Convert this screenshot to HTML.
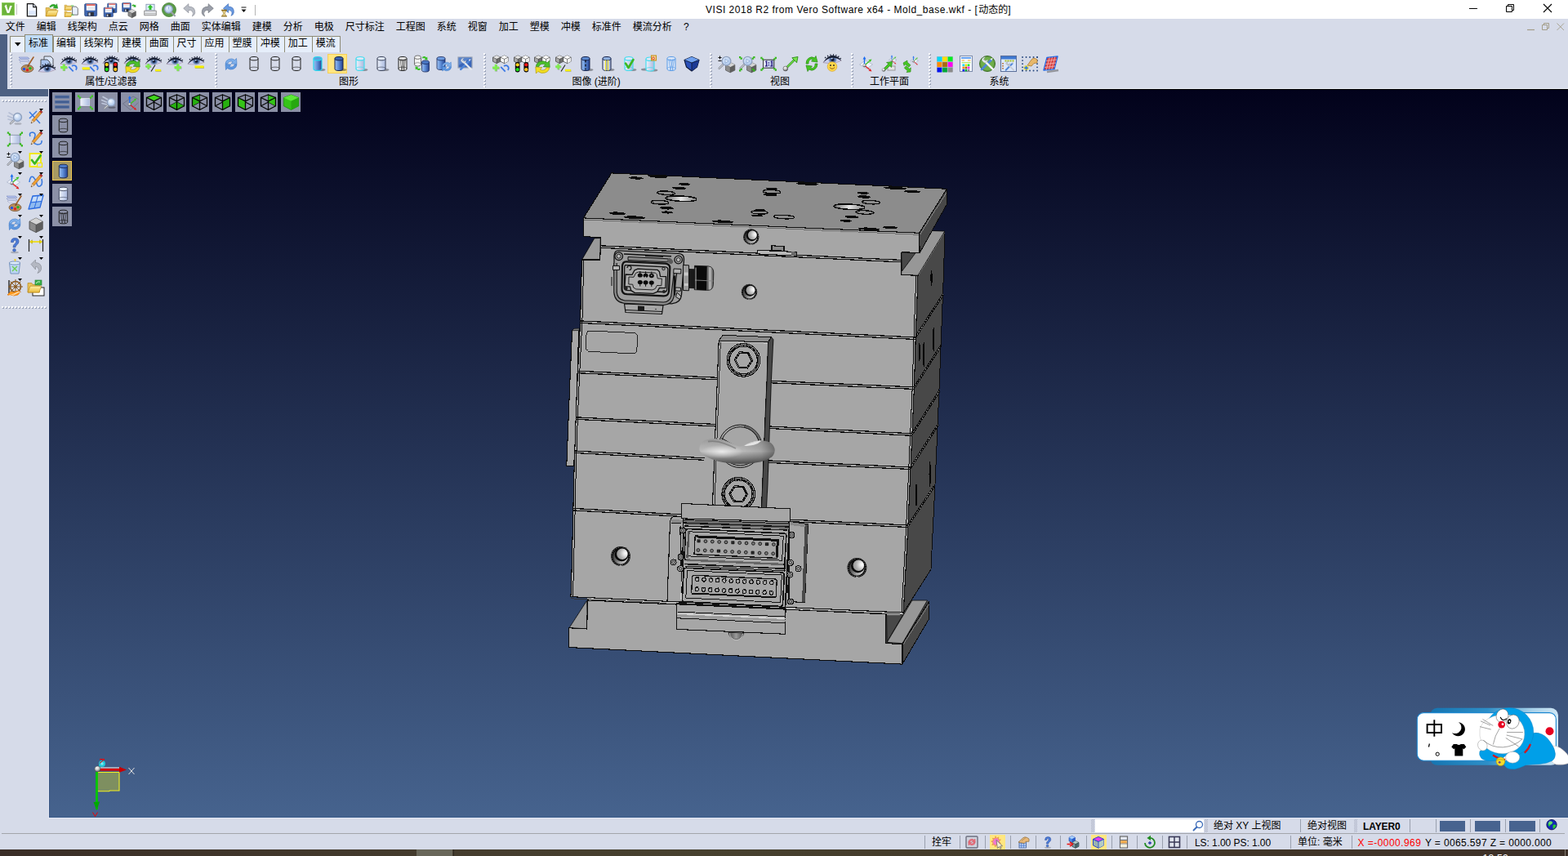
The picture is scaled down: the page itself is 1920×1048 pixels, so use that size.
<!DOCTYPE html>
<html lang="zh"><head><meta charset="utf-8"><title>VISI 2018 R2 - Mold_base.wkf</title>
<style>
html,body{margin:0;padding:0;overflow:hidden}
body{width:1920px;height:1048px;overflow:hidden;position:relative;background:#d6dbe9;font-family:"Liberation Sans",sans-serif;font-size:12px;color:#000}
body>div,body>svg,.abs{position:absolute}
svg.t{position:absolute;overflow:visible}
.lt{position:absolute;white-space:nowrap;line-height:16px}
.cj{font-family:"Liberation Sans","Noto Sans CJK SC",sans-serif;font-size:12px;color:#000}
.ic{position:absolute;overflow:visible}
</style></head>
<body>
<div style="left:0px;top:0px;width:1920px;height:23px;background:#fff;"></div>
<div style="left:0px;top:42px;width:9px;height:67px;background:#4d6082;"></div>
<div style="left:0px;top:108px;width:60px;height:10px;background:#4d6082;"></div>
<div id="vp" style="left:60px;top:109px;width:1860px;height:892px;background:linear-gradient(#02021b,#46638e)"></div>
<div style="left:60px;top:109px;width:1860px;height:1px;background:#000;"></div>
<div style="left:60px;top:110px;width:1px;height:891px;background:rgba(40,70,120,.35);"></div>
<div style="left:60px;top:1000px;width:1860px;height:1px;background:rgba(40,80,130,.45);"></div>
<div style="left:59px;top:109px;width:1px;height:893px;background:#e2e6f3;"></div>
<div style="left:59px;top:1001px;width:1861px;height:1px;background:#e2e6f3;"></div>
<svg width="0" height="0" style="position:absolute" aria-hidden="true"><defs><linearGradient id="gBlue" x1="0" x2="1"><stop offset="0" stop-color="#9ec1f0"/><stop offset=".45" stop-color="#5f8fd8"/><stop offset="1" stop-color="#23408f"/></linearGradient><linearGradient id="gPale" x1="0" x2="1"><stop offset="0" stop-color="#eef2fb"/><stop offset=".5" stop-color="#cbd6ee"/><stop offset="1" stop-color="#a9b8dc"/></linearGradient><linearGradient id="gGreen" x1="0" y1="0" x2="1" y2="1"><stop offset="0" stop-color="#8ae05a"/><stop offset="1" stop-color="#2f9a1e"/></linearGradient><linearGradient id="gGray" x1="0" y1="0" x2="1" y2="1"><stop offset="0" stop-color="#d8d8d8"/><stop offset="1" stop-color="#7a7a7a"/></linearGradient><linearGradient id="gYel" x1="0" y1="0" x2="0" y2="1"><stop offset="0" stop-color="#fff0a8"/><stop offset="1" stop-color="#e8b93a"/></linearGradient><radialGradient id="gLens" cx=".4" cy=".35" r=".7"><stop offset="0" stop-color="#f4f9ff"/><stop offset="1" stop-color="#9dbbe6"/></radialGradient><radialGradient id="gBall" cx=".4" cy=".3" r=".7"><stop offset="0" stop-color="#fff"/><stop offset=".5" stop-color="#c8c8c8"/><stop offset="1" stop-color="#555"/></radialGradient><radialGradient id="gIris" cx=".5" cy=".5" r=".5"><stop offset="0" stop-color="#1a2440"/><stop offset=".45" stop-color="#3c5a92"/><stop offset="1" stop-color="#9fb4d6"/></radialGradient><linearGradient id="gBlueV" x1="0" y1="0" x2="0" y2="1"><stop offset="0" stop-color="#a9c9f2"/><stop offset="1" stop-color="#3b6cc0"/></linearGradient></defs></svg>
<svg class="ic" style="left:2px;top:3px" width="16" height="16" viewBox="0 0 16 16"><rect width="16" height="16" fill="#6cb33a"/><rect x=".5" y=".5" width="15" height="15" fill="none" stroke="#8fd060" stroke-width="1"/><path d="M3.500 4h2.600l2 6.500L10.200 4h2.600L9.300 13H6.800z" fill="#fff"/><circle cx="5.400" cy="3.600" r=".9" fill="#fff"/></svg><div class="abs" style="left:20px;top:5px;width:1px;height:13px;background:#c8c8c8"></div><svg class="ic" style="left:30px;top:2.8px" width="18" height="18" viewBox="0 0 16 16"><path d="M3 1.500h6.500l3.500 3.500v10H3z" fill="#f4f7ff" stroke="#111" stroke-width="1.100"/><path d="M9.500 1.500v3.500h3.500" fill="#dfe8fb" stroke="#111" stroke-width=".9"/><path d="M4 9h8v5H4z" fill="#d6e2fa" opacity=".8"/></svg><svg class="ic" style="left:54.5px;top:2.8px" width="18" height="18" viewBox="0 0 16 16"><g transform="translate(1 3) scale(0.95)"><path d="M0 3h4l1 1.5h7v8H0z" fill="#e9c35a" stroke="#b88a1e" stroke-width=".6"/><path d="M0 12.5l2.5-6.5h11.5l-2.5 6.5z" fill="url(#gYel)" stroke="#b88a1e" stroke-width=".6"/></g><path d="M5 4.500q3-4 7-1.500l1-1.500 1 5-5-.5 1.300-1.300q-2.300-1.500-4.300.8z" fill="#2fae28" stroke="#1d7a18" stroke-width=".4"/></svg><svg class="ic" style="left:78.5px;top:2.8px" width="18" height="18" viewBox="0 0 16 16"><g transform="translate(0 1) scale(0.6)"><path d="M0 3h4l1 1.5h7v8H0z" fill="#e9c35a" stroke="#b88a1e" stroke-width=".6"/><path d="M0 12.5l2.5-6.5h11.5l-2.5 6.5z" fill="url(#gYel)" stroke="#b88a1e" stroke-width=".6"/></g><g transform="translate(0 8) scale(0.6)"><path d="M0 3h4l1 1.5h7v8H0z" fill="#e9c35a" stroke="#b88a1e" stroke-width=".6"/><path d="M0 12.5l2.5-6.5h11.5l-2.5 6.5z" fill="url(#gYel)" stroke="#b88a1e" stroke-width=".6"/></g><path d="M8.500 4.500h4l2 2v7h-6z" fill="#e8f0fd" stroke="#555" stroke-width=".7"/><path d="M7 3.500h3M7 13.500h3" stroke="#58c048" stroke-width=".9"/></svg><svg class="ic" style="left:102px;top:2.8px" width="18" height="18" viewBox="0 0 16 16"><g transform="translate(1.5 1.5) scale(0.95)"><rect x="0" y="0" width="14" height="14" rx="1" fill="#3f66b0" stroke="#26407a" stroke-width=".7"/><rect x="2" y="0.5" width="10" height="7" fill="#fff"/><rect x="2" y=".5" width="10" height="1.6" fill="#e05a50"/><path d="M3 4h8M3 5.8h8" stroke="#b9c2d2" stroke-width=".6"/><rect x="3.5" y="9.5" width="7" height="4.5" fill="#2b2f3c"/><rect x="4.5" y="10.3" width="2" height="3.2" fill="#c9d3e6"/></g></svg><svg class="ic" style="left:126px;top:2.8px" width="18" height="18" viewBox="0 0 16 16"><g transform="translate(5 1) scale(0.72)"><rect x="0" y="0" width="14" height="14" rx="1" fill="#3f66b0" stroke="#26407a" stroke-width=".7"/><rect x="2" y="0.5" width="10" height="7" fill="#fff"/><rect x="2" y=".5" width="10" height="1.6" fill="#e05a50"/><path d="M3 4h8M3 5.8h8" stroke="#b9c2d2" stroke-width=".6"/><rect x="3.5" y="9.5" width="7" height="4.5" fill="#2b2f3c"/><rect x="4.5" y="10.3" width="2" height="3.2" fill="#c9d3e6"/></g><g transform="translate(1 5.5) scale(0.72)"><rect x="0" y="0" width="14" height="14" rx="1" fill="#3f66b0" stroke="#26407a" stroke-width=".7"/><rect x="2" y="0.5" width="10" height="7" fill="#fff"/><rect x="2" y=".5" width="10" height="1.6" fill="#e05a50"/><path d="M3 4h8M3 5.8h8" stroke="#b9c2d2" stroke-width=".6"/><rect x="3.5" y="9.5" width="7" height="4.5" fill="#2b2f3c"/><rect x="4.5" y="10.3" width="2" height="3.2" fill="#c9d3e6"/></g></svg><svg class="ic" style="left:149px;top:2.8px" width="18" height="18" viewBox="0 0 16 16"><g transform="translate(0.5 0.5) scale(0.68)"><rect x="0" y="0" width="14" height="14" rx="1" fill="#3f66b0" stroke="#26407a" stroke-width=".7"/><rect x="2" y="0.5" width="10" height="7" fill="#fff"/><rect x="2" y=".5" width="10" height="1.6" fill="#e05a50"/><path d="M3 4h8M3 5.8h8" stroke="#b9c2d2" stroke-width=".6"/><rect x="3.5" y="9.5" width="7" height="4.5" fill="#2b2f3c"/><rect x="4.5" y="10.3" width="2" height="3.2" fill="#c9d3e6"/></g><path d="M11 3q2-1.500 3.500 0l.8-.8.2 3-3-.3.900-.8q-1-.8-2.200 0z" fill="#2fae28"/><g transform="translate(7 7.500) scale(.7)"><g transform="translate(0 0) scale(1)"><path d="M0 3l6-3 6 3v7l-6 3-6-3z" fill="#8c8c8c" stroke="#444" stroke-width=".6"/><path d="M0 3l6-3 6 3-6 3z" fill="#d4d4d4"/><path d="M6 6l6-3v7l-6 3z" fill="#5e5e5e"/><path d="M0 3l6 3v7" fill="none" stroke="#444" stroke-width=".5"/></g></g></svg><svg class="ic" style="left:174.5px;top:2.8px" width="18" height="18" viewBox="0 0 16 16"><rect x="3.500" y="2" width="9" height="7" fill="#dff0ff" stroke="#7a8aa8" stroke-width=".7"/><path d="M8 2.500l3 3H9.300v2.500H6.700V5.500H5z" fill="#2fc028"/><path d="M1.500 9h13v5h-13z" fill="#e4e6ea" stroke="#888" stroke-width=".8"/><path d="M1.500 12.200h13" stroke="#aaa" stroke-width=".8"/></svg><svg class="ic" style="left:198px;top:2.8px" width="18" height="18" viewBox="0 0 16 16"><circle cx="8" cy="8" r="7.600" fill="#5a9a48" stroke="#3f7a30" stroke-width=".6"/><circle cx="7.500" cy="7.300" r="4.300" fill="url(#gLens)" stroke="#8fa0bd" stroke-width="1.100"/><path d="M10.800 10.800l3.400 3.600" stroke="#9aa0aa" stroke-width="2" stroke-linecap="round"/><path d="M7.500 4.500v3" stroke="#8fb0e0" stroke-width=".8"/></svg><svg class="ic" style="left:223px;top:2.8px" width="18" height="18" viewBox="0 0 16 16"><path d="M1.500 6.500L7 1.500v3q7.500 0 7 7-.5 2.500-3 3.500 2-3.500 0-5.500-1.500-1.300-4-1.200v3z" fill="#b8bcc4" stroke="#8a8e98" stroke-width=".6"/></svg><svg class="ic" style="left:245px;top:2.8px" width="18" height="18" viewBox="0 0 16 16"><path d="M14.500 6.500L9 1.500v3q-7.500 0-7 7 .5 2.500 3 3.500-2-3.500 0-5.500 1.500-1.300 4-1.200v3z" fill="#9a9ea8" stroke="#70747e" stroke-width=".6"/></svg><svg class="ic" style="left:270px;top:2.8px" width="18" height="18" viewBox="0 0 16 16"><path d="M3 6.500L8.500 1.500v3q6.500 0 6 6.500-.5 2.500-3 3.500 2-3.500 0-5.200-1.300-1.300-3-1.200v3z" fill="#6a9ae0" stroke="#3a6ab8" stroke-width=".6"/><path d="M1 8.500h6M1 15h6" stroke="#8a6a1a" stroke-width="1.300"/><path d="M1.800 9l4.400 0-1.600 2.800 1.600 2.800H1.800l1.600-2.800z" fill="#e8d48a" stroke="#8a6a1a" stroke-width=".5"/></svg><svg class="ic" style="left:295px;top:8px" width="8" height="8"><path d="M.5 1h6" stroke="#111" stroke-width="1"/><path d="M.5 3.500h6L3.500 7z" fill="#111"/></svg><div class="abs" style="left:312px;top:6px;width:1px;height:13px;background:#b4b4b4"></div>
<div class="lt" style="left:864px;top:3.500px;font-size:12px;letter-spacing:0.520px">VISI 2018 R2 from Vero Software x64 - Mold_base.wkf - [</div>
<div class="lt cj" style="left:1198.2px;top:3.5px">动态的</div>
<div class="lt" style="left:1234.300px;top:3.500px;font-size:12px">]</div>
<svg class="ic" style="left:1798px;top:4px" width="108" height="14"><path d="M1 6.500h10" stroke="#000" stroke-width="1"/><path d="M46.500 3.500h7v7h-7zM48.500 3.500v-2h7v7h-2" fill="none" stroke="#000" stroke-width="1"/><path d="M92 1l10 10M102 1l-10 10" stroke="#000" stroke-width="1.100"/></svg><svg class="ic" style="left:1869px;top:27px" width="48" height="12"><path d="M1 9.500h9" stroke="#a39d88" stroke-width="1.200"/><path d="M19.500 3.500h6v6h-6zM21.500 3.500v-2h6v6h-2" fill="none" stroke="#a39d88" stroke-width="1"/><path d="M37.500 1.500l8.500 8.500M46 1.500l-8.500 8.500" stroke="#a39d88" stroke-width=".9"/></svg>
<div class="lt cj" style="left:6.7px;top:24.7px">文件</div>
<div class="lt cj" style="left:44.7px;top:24.7px">编辑</div>
<div class="lt cj" style="left:82.7px;top:24.7px">线架构</div>
<div class="lt cj" style="left:132.7px;top:24.7px">点云</div>
<div class="lt cj" style="left:170.7px;top:24.7px">网格</div>
<div class="lt cj" style="left:208.7px;top:24.7px">曲面</div>
<div class="lt cj" style="left:246.7px;top:24.7px">实体编辑</div>
<div class="lt cj" style="left:308.7px;top:24.7px">建模</div>
<div class="lt cj" style="left:346.7px;top:24.7px">分析</div>
<div class="lt cj" style="left:384.7px;top:24.7px">电极</div>
<div class="lt cj" style="left:422.7px;top:24.7px">尺寸标注</div>
<div class="lt cj" style="left:484.7px;top:24.7px">工程图</div>
<div class="lt cj" style="left:534.7px;top:24.7px">系统</div>
<div class="lt cj" style="left:572.7px;top:24.7px">视窗</div>
<div class="lt cj" style="left:610.7px;top:24.7px">加工</div>
<div class="lt cj" style="left:648.7px;top:24.7px">塑模</div>
<div class="lt cj" style="left:686.7px;top:24.7px">冲模</div>
<div class="lt cj" style="left:724.7px;top:24.7px">标准件</div>
<div class="lt cj" style="left:774.7px;top:24.7px">模流分析</div>
<div class="lt" style="left:837px;top:25px;font-size:12px">?</div>
<div class="abs" style="left:12px;top:44.2px;width:18.8px;height:19.8px;background:#eaf0fb;border:1px solid #8e8b76;border-bottom:none;box-sizing:border-box"></div><svg class="ic" style="left:17.600px;top:52.200px" width="8" height="5"><path d="M0 0h7.500L3.750 4.500z" fill="#000"/></svg><div class="abs" style="left:30.3px;top:42.2px;width:34.8px;height:21.8px;background:#c0dbf7;border:1px solid #8e8b76;border-bottom:none;box-sizing:border-box"></div><div class="lt cj" style="left:35.1px;top:44.7px">标准</div><div class="abs" style="left:64.7px;top:44.2px;width:34.4px;height:19.8px;background:#e6eefa;border:1px solid #8e8b76;border-bottom:none;box-sizing:border-box"></div><div class="lt cj" style="left:69px;top:45.1px">编辑</div><div class="abs" style="left:98.1px;top:44.2px;width:47.2px;height:19.8px;background:#e6eefa;border:1px solid #8e8b76;border-bottom:none;box-sizing:border-box"></div><div class="lt cj" style="left:102.85px;top:45.1px">线架构</div><div class="abs" style="left:144.3px;top:44.2px;width:35px;height:19.8px;background:#e6eefa;border:1px solid #8e8b76;border-bottom:none;box-sizing:border-box"></div><div class="lt cj" style="left:148.9px;top:45.1px">建模</div><div class="abs" style="left:178.3px;top:44.2px;width:34.6px;height:19.8px;background:#e6eefa;border:1px solid #8e8b76;border-bottom:none;box-sizing:border-box"></div><div class="lt cj" style="left:182.7px;top:45.1px">曲面</div><div class="abs" style="left:211.9px;top:44.2px;width:35px;height:19.8px;background:#e6eefa;border:1px solid #8e8b76;border-bottom:none;box-sizing:border-box"></div><div class="lt cj" style="left:216.5px;top:45.1px">尺寸</div><div class="abs" style="left:245.9px;top:44.2px;width:35px;height:19.8px;background:#e6eefa;border:1px solid #8e8b76;border-bottom:none;box-sizing:border-box"></div><div class="lt cj" style="left:250.5px;top:45.1px">应用</div><div class="abs" style="left:279.9px;top:44.2px;width:35px;height:19.8px;background:#e6eefa;border:1px solid #8e8b76;border-bottom:none;box-sizing:border-box"></div><div class="lt cj" style="left:284.5px;top:45.1px">塑膜</div><div class="abs" style="left:313.9px;top:44.2px;width:35.3px;height:19.8px;background:#e6eefa;border:1px solid #8e8b76;border-bottom:none;box-sizing:border-box"></div><div class="lt cj" style="left:318.65px;top:45.1px">冲模</div><div class="abs" style="left:348.2px;top:44.2px;width:34.7px;height:19.8px;background:#e6eefa;border:1px solid #8e8b76;border-bottom:none;box-sizing:border-box"></div><div class="lt cj" style="left:352.65px;top:45.1px">加工</div><div class="abs" style="left:381.9px;top:44.2px;width:35.5px;height:19.8px;background:#e6eefa;border:1px solid #8e8b76;border-bottom:none;box-sizing:border-box"></div><div class="lt cj" style="left:386.75px;top:45.1px">模流</div>
<div class="abs" style="left:9px;top:107.5px;width:1911px;height:1.5px;background:#e9edf5"></div><div class="abs" style="left:12.2px;top:65px;width:3px;height:42px;background:radial-gradient(circle at 1px 1px,#fff 0.9px,rgba(255,255,255,0) 1.3px),radial-gradient(circle at 2px 2px,#9aa3b8 0.9px,rgba(0,0,0,0) 1.3px);background-size:3px 4px"></div><svg class="ic" style="left:21px;top:66px" width="24" height="24" viewBox="0 0 24 24"><path d="M2 4h11l2 2H4z" fill="#b9c6ee" stroke="#6878b8" stroke-width=".5"/><path d="M2 7h11l2 2H4z" fill="#dfe4f4" stroke="#6878b8" stroke-width=".5"/><path d="M3 10h10l2 2H5z" fill="#f2f4fa" stroke="#8a93b8" stroke-width=".5"/><ellipse cx="12.5" cy="18" rx="7.5" ry="4.6" fill="#b98c5a" stroke="#6b4a28" stroke-width=".7"/><circle cx="8.5" cy="18.5" r="1.7" fill="#2050e0"/><circle cx="12.5" cy="19.8" r="1.7" fill="#e02020"/><circle cx="16" cy="17.6" r="1.7" fill="#20b820"/><path d="M13 15L20 4" stroke="#a0602a" stroke-width="1.6" stroke-linecap="round"/><path d="M12.2 16.5l1.6-2.6 1 .7z" fill="#333"/></svg><svg class="ic" style="left:46.5px;top:66px" width="24" height="24" viewBox="0 0 24 24"><path d="M7 3h8l3 3v10H7z" fill="#d9e5f8" stroke="#333" stroke-width=".8"/><path d="M3 7h8l3 3v9H3z" fill="#a9c3ec" stroke="#333" stroke-width=".8"/><g transform="translate(10.5 18) scale(1.05)"><path d="M-10 3.300Q-5 -3.800 0 -4Q6 -3.800 10 1.200Q4 4.200 -1 4Q-6 4.200 -10 3.300Z" fill="#c9cdee" stroke="#8a6a7a" stroke-width=".4"/><ellipse cx=".5" cy=".2" rx="4.600" ry="4" fill="url(#gIris)"/><circle cx=".4" cy="0" r="1.600" fill="#0e1428"/><circle cx="-.3" cy="-1.300" r=".9" fill="#cfe0ff"/><path d="M-10.200 3.500Q-5.500 -4.200 0 -4.800Q6.500 -4.600 10.400 1.400Q6 -1.900 0 -2.100Q-5 -1.800 -10.200 3.500Z" fill="#182034"/><path d="M-7 -1.600l-1.100-1.200M-4.500 -3.300l-.7-1.400M-1.700 -4.400l-.2-1.500M1.300 -4.600l.2-1.500M4 -4l.7-1.400M6.500 -2.700l1.100-1.200M8.600 -.8l1.300-.9" stroke="#182034" stroke-width="1.100" fill="none"/></g></svg><svg class="ic" style="left:72px;top:66px" width="24" height="24" viewBox="0 0 24 24"><g transform="translate(12 9) scale(1)"><path d="M-10 3.300Q-5 -3.800 0 -4Q6 -3.800 10 1.200Q4 4.200 -1 4Q-6 4.200 -10 3.300Z" fill="#c9cdee" stroke="#8a6a7a" stroke-width=".4"/><ellipse cx=".5" cy=".2" rx="4.600" ry="4" fill="url(#gIris)"/><circle cx=".4" cy="0" r="1.600" fill="#0e1428"/><circle cx="-.3" cy="-1.300" r=".9" fill="#cfe0ff"/><path d="M-10.200 3.500Q-5.500 -4.200 0 -4.800Q6.500 -4.600 10.400 1.400Q6 -1.900 0 -2.100Q-5 -1.800 -10.200 3.500Z" fill="#182034"/><path d="M-7 -1.600l-1.100-1.200M-4.500 -3.300l-.7-1.400M-1.700 -4.400l-.2-1.500M1.300 -4.600l.2-1.500M4 -4l.7-1.400M6.500 -2.700l1.100-1.200M8.600 -.8l1.300-.9" stroke="#182034" stroke-width="1.100" fill="none"/></g><path d="M2.6 17h8M6.6 13v8" stroke="#4a5a3a" stroke-width="2.7" fill="none" opacity=".45"/><path d="M2.1 16.4h8M6.1 12.4v8" stroke="#7fee4e" stroke-width="2.7" fill="none"/><path d="M12.2 15.6L17.7 21.4" stroke="#3a78e6" stroke-width="1.700" fill="none"/><path d="M16.1 15A3.200 3.200 0 0 1 20.8 19.7" stroke="#3a78e6" stroke-width="1.800" fill="none"/></svg><svg class="ic" style="left:98px;top:66px" width="24" height="24" viewBox="0 0 24 24"><g transform="translate(12 9) scale(1)"><path d="M-10 3.300Q-5 -3.800 0 -4Q6 -3.800 10 1.200Q4 4.200 -1 4Q-6 4.200 -10 3.300Z" fill="#c9cdee" stroke="#8a6a7a" stroke-width=".4"/><ellipse cx=".5" cy=".2" rx="4.600" ry="4" fill="url(#gIris)"/><circle cx=".4" cy="0" r="1.600" fill="#0e1428"/><circle cx="-.3" cy="-1.300" r=".9" fill="#cfe0ff"/><path d="M-10.200 3.500Q-5.500 -4.200 0 -4.800Q6.500 -4.600 10.400 1.400Q6 -1.900 0 -2.100Q-5 -1.800 -10.200 3.500Z" fill="#182034"/><path d="M-7 -1.600l-1.100-1.200M-4.500 -3.300l-.7-1.400M-1.700 -4.400l-.2-1.500M1.300 -4.600l.2-1.500M4 -4l.7-1.400M6.500 -2.700l1.100-1.200M8.600 -.8l1.300-.9" stroke="#182034" stroke-width="1.100" fill="none"/></g><path d="M3.1 18.4h9" stroke="#8a8a10" stroke-width="2.7" fill="none" opacity=".5"/><path d="M2.7 17.7h9" stroke="#f6f000" stroke-width="2.7" fill="none"/><path d="M12.2 15.6L17.7 21.4" stroke="#3a78e6" stroke-width="1.700" fill="none"/><path d="M16.1 15A3.200 3.200 0 0 1 20.8 19.7" stroke="#3a78e6" stroke-width="1.800" fill="none"/></svg><svg class="ic" style="left:124px;top:66px" width="24" height="24" viewBox="0 0 24 24"><g transform="translate(12 8.3) scale(1)"><path d="M-10 3.300Q-5 -3.800 0 -4Q6 -3.800 10 1.200Q4 4.200 -1 4Q-6 4.200 -10 3.300Z" fill="#c9cdee" stroke="#8a6a7a" stroke-width=".4"/><ellipse cx=".5" cy=".2" rx="4.600" ry="4" fill="url(#gIris)"/><circle cx=".4" cy="0" r="1.600" fill="#0e1428"/><circle cx="-.3" cy="-1.300" r=".9" fill="#cfe0ff"/><path d="M-10.200 3.500Q-5.500 -4.200 0 -4.800Q6.500 -4.600 10.400 1.400Q6 -1.900 0 -2.100Q-5 -1.800 -10.200 3.500Z" fill="#182034"/><path d="M-7 -1.600l-1.100-1.200M-4.500 -3.300l-.7-1.400M-1.700 -4.400l-.2-1.500M1.300 -4.600l.2-1.500M4 -4l.7-1.400M6.500 -2.700l1.100-1.200M8.600 -.8l1.300-.9" stroke="#182034" stroke-width="1.100" fill="none"/></g><rect x="3.8" y="9.8" width="5.800" height="12.400" rx="2.400" fill="#0c0c0c"/><rect x="14.4" y="9.8" width="5.800" height="12.400" rx="2.400" fill="#0c0c0c"/><circle cx="6.7" cy="13.1" r="2.150" fill="#ffd21e"/><circle cx="6.7" cy="19" r="2.150" fill="#1ee01a"/><circle cx="17.3" cy="13.1" r="2.150" fill="#f01414"/><circle cx="17.3" cy="19" r="2.150" fill="#ffc21e"/></svg><svg class="ic" style="left:150px;top:66px" width="24" height="24" viewBox="0 0 24 24"><g transform="translate(12 8.3) scale(1)"><path d="M-10 3.300Q-5 -3.800 0 -4Q6 -3.800 10 1.200Q4 4.200 -1 4Q-6 4.200 -10 3.300Z" fill="#c9cdee" stroke="#8a6a7a" stroke-width=".4"/><ellipse cx=".5" cy=".2" rx="4.600" ry="4" fill="url(#gIris)"/><circle cx=".4" cy="0" r="1.600" fill="#0e1428"/><circle cx="-.3" cy="-1.300" r=".9" fill="#cfe0ff"/><path d="M-10.200 3.500Q-5.500 -4.200 0 -4.800Q6.500 -4.600 10.400 1.400Q6 -1.900 0 -2.100Q-5 -1.800 -10.200 3.500Z" fill="#182034"/><path d="M-7 -1.600l-1.100-1.200M-4.500 -3.300l-.7-1.400M-1.700 -4.400l-.2-1.500M1.300 -4.600l.2-1.500M4 -4l.7-1.400M6.500 -2.700l1.100-1.200M8.600 -.8l1.300-.9" stroke="#182034" stroke-width="1.100" fill="none"/></g><g transform="translate(12.5 15) scale(1.25)"><path d="M-6.5 0a6.5 5.5 0 0 1 11-3.8l2-2 .5 6.5-6.5-.6 2-1.9a3.8 3.2 0 0 0-6.2 1.8z" fill="#4cc02a" stroke="#2a7f14" stroke-width=".5"/><path d="M6.5 1a6.5 5.5 0 0 1-11 3.8l-2 2-.5-6.5 6.5.6-2 1.9a3.8 3.2 0 0 0 6.2-1.8z" fill="#f2de22" stroke="#a8920a" stroke-width=".5"/></g></svg><svg class="ic" style="left:176px;top:66px" width="24" height="24" viewBox="0 0 24 24"><g transform="translate(12 9) scale(1)"><path d="M-10 3.300Q-5 -3.800 0 -4Q6 -3.800 10 1.200Q4 4.200 -1 4Q-6 4.200 -10 3.300Z" fill="#c9cdee" stroke="#8a6a7a" stroke-width=".4"/><ellipse cx=".5" cy=".2" rx="4.600" ry="4" fill="url(#gIris)"/><circle cx=".4" cy="0" r="1.600" fill="#0e1428"/><circle cx="-.3" cy="-1.300" r=".9" fill="#cfe0ff"/><path d="M-10.200 3.500Q-5.500 -4.200 0 -4.800Q6.500 -4.600 10.400 1.400Q6 -1.900 0 -2.100Q-5 -1.800 -10.200 3.500Z" fill="#182034"/><path d="M-7 -1.600l-1.100-1.200M-4.500 -3.300l-.7-1.400M-1.700 -4.400l-.2-1.500M1.300 -4.600l.2-1.500M4 -4l.7-1.400M6.500 -2.700l1.100-1.200M8.600 -.8l1.300-.9" stroke="#182034" stroke-width="1.100" fill="none"/></g><path d="M2.7 15.8h6.6M6 12.5v6.6" stroke="#4a5a3a" stroke-width="2.3" fill="none" opacity=".45"/><path d="M2.2 15.2h6.6M5.5 11.9v6.6" stroke="#7fee4e" stroke-width="2.3" fill="none"/><path d="M9 21.500l5-8" stroke="#222" stroke-width="1.100"/><path d="M14.4 20.7h7" stroke="#8a8a10" stroke-width="2.3" fill="none" opacity=".5"/><path d="M14 20h7" stroke="#f6f000" stroke-width="2.3" fill="none"/></svg><svg class="ic" style="left:202px;top:66px" width="24" height="24" viewBox="0 0 24 24"><g transform="translate(12 9) scale(1)"><path d="M-10 3.300Q-5 -3.800 0 -4Q6 -3.800 10 1.200Q4 4.200 -1 4Q-6 4.200 -10 3.300Z" fill="#c9cdee" stroke="#8a6a7a" stroke-width=".4"/><ellipse cx=".5" cy=".2" rx="4.600" ry="4" fill="url(#gIris)"/><circle cx=".4" cy="0" r="1.600" fill="#0e1428"/><circle cx="-.3" cy="-1.300" r=".9" fill="#cfe0ff"/><path d="M-10.200 3.500Q-5.500 -4.200 0 -4.800Q6.500 -4.600 10.400 1.400Q6 -1.900 0 -2.100Q-5 -1.800 -10.200 3.500Z" fill="#182034"/><path d="M-7 -1.600l-1.100-1.200M-4.500 -3.300l-.7-1.400M-1.700 -4.400l-.2-1.500M1.300 -4.600l.2-1.500M4 -4l.7-1.400M6.500 -2.700l1.100-1.200M8.600 -.8l1.300-.9" stroke="#182034" stroke-width="1.100" fill="none"/></g><path d="M12 17.1h8.4M16.2 12.9v8.4" stroke="#4a5a3a" stroke-width="2.8" fill="none" opacity=".45"/><path d="M11.5 16.5h8.4M15.7 12.3v8.4" stroke="#7fee4e" stroke-width="2.8" fill="none"/></svg><svg class="ic" style="left:228px;top:66px" width="24" height="24" viewBox="0 0 24 24"><g transform="translate(12 9) scale(1)"><path d="M-10 3.300Q-5 -3.800 0 -4Q6 -3.800 10 1.200Q4 4.200 -1 4Q-6 4.200 -10 3.300Z" fill="#c9cdee" stroke="#8a6a7a" stroke-width=".4"/><ellipse cx=".5" cy=".2" rx="4.600" ry="4" fill="url(#gIris)"/><circle cx=".4" cy="0" r="1.600" fill="#0e1428"/><circle cx="-.3" cy="-1.300" r=".9" fill="#cfe0ff"/><path d="M-10.200 3.500Q-5.500 -4.200 0 -4.800Q6.500 -4.600 10.400 1.400Q6 -1.900 0 -2.100Q-5 -1.800 -10.200 3.500Z" fill="#182034"/><path d="M-7 -1.600l-1.100-1.200M-4.500 -3.300l-.7-1.400M-1.700 -4.400l-.2-1.500M1.300 -4.600l.2-1.500M4 -4l.7-1.400M6.500 -2.700l1.100-1.200M8.600 -.8l1.300-.9" stroke="#182034" stroke-width="1.100" fill="none"/></g><path d="M10.9 16.5h11" stroke="#8a8a10" stroke-width="2.8" fill="none" opacity=".5"/><path d="M10.500 15.8h11" stroke="#f6f000" stroke-width="2.8" fill="none"/></svg><div class="lt cj" style="left:104.16px;top:92px">属性/过滤器</div><div class="abs" style="left:263px;top:65px;width:3px;height:42px;background:radial-gradient(circle at 1px 1px,#fff 0.9px,rgba(255,255,255,0) 1.3px),radial-gradient(circle at 2px 2px,#9aa3b8 0.9px,rgba(0,0,0,0) 1.3px);background-size:3px 4px"></div><svg class="ic" style="left:271px;top:66px" width="24" height="24" viewBox="0 0 24 24"><g transform="translate(12 12.5) scale(1)"><path d="M-7 -.5a7 6.5 0 0 1 11.5-4.5l2-2 .5 7-7-.6 2.2-2.2a4 3.6 0 0 0-6.4 2.3z" fill="#7fb0ea" stroke="#3d78c8" stroke-width=".6"/><path d="M7 .5a7 6.5 0 0 1-11.5 4.5l-2 2-.5-7 7 .6-2.2 2.2a4 3.6 0 0 0 6.4-2.3z" fill="#5e98e0" stroke="#3d78c8" stroke-width=".6"/></g></svg><svg class="ic" style="left:298.5px;top:66px" width="24" height="24" viewBox="0 0 24 24"><path d="M7 5.7v12.6a5 2.2 0 0 0 10 0v-12.6" fill="none" stroke="#222" stroke-width="1"/><ellipse cx="12" cy="5.7" rx="5" ry="2.2" fill="none" stroke="#222" stroke-width="1"/><path d="M7 18.3a5 2.2 0 0 1 10 0" fill="none" stroke="#222" stroke-width="0.8" opacity=".8"/></svg><svg class="ic" style="left:324.5px;top:66px" width="24" height="24" viewBox="0 0 24 24"><path d="M7 5.7v12.6a5 2.2 0 0 0 10 0v-12.6" fill="none" stroke="#222" stroke-width="1"/><ellipse cx="12" cy="5.7" rx="5" ry="2.2" fill="none" stroke="#222" stroke-width="1"/><path d="M7 18.3a5 2.2 0 0 1 10 0" fill="none" stroke="#222" stroke-width="0.8" opacity=".8"/></svg><svg class="ic" style="left:350.5px;top:66px" width="24" height="24" viewBox="0 0 24 24"><path d="M7 5.7v12.6a5 2.2 0 0 0 10 0v-12.6" fill="none" stroke="#222" stroke-width="1"/><ellipse cx="12" cy="5.7" rx="5" ry="2.2" fill="none" stroke="#222" stroke-width="1"/><path d="M7 18.3a5 2.2 0 0 1 10 0" fill="none" stroke="#222" stroke-width="0.8" opacity=".8"/></svg><svg class="ic" style="left:376.5px;top:66px" width="24" height="24" viewBox="0 0 24 24"><ellipse cx="15.5" cy="19.5" rx="6" ry="1.6" fill="#000" opacity=".35"/><path d="M7 5.7v12.6a5 2.2 0 0 0 10 0v-12.6" fill="url(#gBlue)" stroke="#27d8ee" stroke-width="1.2"/><ellipse cx="12" cy="5.7" rx="5" ry="2.2" fill="#5aa0e0" stroke="#27d8ee" stroke-width="1.2"/></svg><div class="abs" style="left:401px;top:66px;width:24px;height:24px;background:#ffe680;border:1px solid #f7cf5a;box-sizing:border-box"></div><svg class="ic" style="left:402.5px;top:66px" width="24" height="24" viewBox="0 0 24 24"><ellipse cx="15.5" cy="19.5" rx="6" ry="1.6" fill="#000" opacity=".35"/><path d="M7 5.7v12.6a5 2.2 0 0 0 10 0v-12.6" fill="url(#gBlue)" stroke="#16224a" stroke-width="1"/><ellipse cx="12" cy="5.7" rx="5" ry="2.2" fill="#3a63b0" stroke="#16224a" stroke-width="1"/></svg><svg class="ic" style="left:428.5px;top:66px" width="24" height="24" viewBox="0 0 24 24"><ellipse cx="15.5" cy="19.5" rx="6" ry="1.6" fill="#000" opacity=".35"/><path d="M7 5.7v12.6a5 2.2 0 0 0 10 0v-12.6" fill="url(#gPale)" stroke="#46dcee" stroke-width="1.2"/><ellipse cx="12" cy="5.7" rx="5" ry="2.2" fill="#dfe7f6" stroke="#46dcee" stroke-width="1.2"/><path d="M7 18.3a5 2.2 0 0 1 10 0" fill="none" stroke="#46dcee" stroke-width="0.96" opacity=".8"/></svg><svg class="ic" style="left:454.5px;top:66px" width="24" height="24" viewBox="0 0 24 24"><ellipse cx="15.5" cy="19.5" rx="6" ry="1.6" fill="#000" opacity=".35"/><path d="M7 5.7v12.6a5 2.2 0 0 0 10 0v-12.6" fill="url(#gPale)" stroke="#3a4258" stroke-width="1"/><ellipse cx="12" cy="5.7" rx="5" ry="2.2" fill="#dfe7f6" stroke="#3a4258" stroke-width="1"/><path d="M7 18.3a5 2.2 0 0 1 10 0" fill="none" stroke="#3a4258" stroke-width="0.8" opacity=".8"/></svg><svg class="ic" style="left:480.5px;top:66px" width="24" height="24" viewBox="0 0 24 24"><path d="M7 5.7v12.6a5 2.2 0 0 0 10 0v-12.6" fill="#e9e9e9" stroke="#222" stroke-width="1"/><ellipse cx="12" cy="5.7" rx="5" ry="2.2" fill="#e9e9e9" stroke="#222" stroke-width="1"/><path d="M7 18.3a5 2.2 0 0 1 10 0" fill="none" stroke="#222" stroke-width="0.8" opacity=".8"/><path d="M9 6l2 14M11 6l3 14M14 6l-3 14M15.5 6l-2 14" stroke="#222" stroke-width=".6" fill="none"/></svg><svg class="ic" style="left:505px;top:66px" width="24" height="24" viewBox="0 0 24 24"><path d="M2.5 4.2v8.6a4 2.2 0 0 0 8 0v-8.6" fill="#f2f2f2" stroke="#555" stroke-width="0.8"/><ellipse cx="6.5" cy="4.2" rx="4" ry="2.2" fill="#f2f2f2" stroke="#555" stroke-width="0.8"/><path d="M2.5 12.8a4 2.2 0 0 1 8 0" fill="none" stroke="#555" stroke-width="0.64" opacity=".8"/><path d="M11.5 10.2v9.6a4.5 2.2 0 0 0 9 0v-9.6" fill="url(#gBlue)" stroke="#1b2a5a" stroke-width="0.8"/><ellipse cx="16" cy="10.2" rx="4.5" ry="2.2" fill="#4a78c6" stroke="#1b2a5a" stroke-width="0.8"/><path d="M12 4q3-2 5 .5l1.200-1 .3 4-3.800-.6 1.200-1q-1.500-1.500-3.400-.4z" fill="#36c020"/><path d="M10 19q-3 2-5-.5l-1.200 1-.3-4 3.800.6-1.200 1q1.500 1.500 3.400.4z" fill="#36c020"/></svg><svg class="ic" style="left:532px;top:66px" width="24" height="24" viewBox="0 0 24 24"><path d="M3 5.7v11.6a5 2.2 0 0 0 10 0v-11.6" fill="url(#gBlue)" stroke="#1b2a5a" stroke-width="0.8"/><ellipse cx="8" cy="5.7" rx="5" ry="2.2" fill="#6d9be0" stroke="#1b2a5a" stroke-width="0.8"/><g transform="translate(15 15.5) scale(0.8)"><path d="M-7 -.5a7 6.5 0 0 1 11.5-4.5l2-2 .5 7-7-.6 2.2-2.2a4 3.6 0 0 0-6.4 2.3z" fill="#7fb0ea" stroke="#3d78c8" stroke-width=".6"/><path d="M7 .5a7 6.5 0 0 1-11.5 4.5l-2 2-.5-7 7 .6-2.2 2.2a4 3.6 0 0 0 6.4-2.3z" fill="#5e98e0" stroke="#3d78c8" stroke-width=".6"/></g></svg><svg class="ic" style="left:557.5px;top:66px" width="24" height="24" viewBox="0 0 24 24"><rect x="3" y="4" width="17" height="13" fill="#3b66b8" stroke="#9aa3b4" stroke-width="1.2"/><path d="M3.6 4.600h15.800L3.600 14z" fill="#6e97d8" opacity=".6"/><g transform="translate(12.5 12.5) scale(1.05)"><path d="M-6 6L4-4" stroke="#4f86d8" stroke-width="2.4" stroke-linecap="round"/><path d="M6 6L-3-3" stroke="#e6e9ee" stroke-width="2.2" stroke-linecap="round"/><path d="M-5.8-3.500a3 3 0 0 1 3.600-3.400l-1.800 1.900.6 1.700 1.800.5 1.800-1.800a3 3 0 0 1-3.600 3.500z" fill="#e6e9ee" stroke="#8a93a3" stroke-width=".4"/><path d="M3-5l3-1.500-1.400 3z" fill="#e6e9ee"/></g></svg><div class="lt cj" style="left:415px;top:92px">图形</div><div class="abs" style="left:592px;top:65px;width:3px;height:42px;background:radial-gradient(circle at 1px 1px,#fff 0.9px,rgba(255,255,255,0) 1.3px),radial-gradient(circle at 2px 2px,#9aa3b8 0.9px,rgba(0,0,0,0) 1.3px);background-size:3px 4px"></div><svg class="ic" style="left:600.5px;top:66px" width="24" height="24" viewBox="0 0 24 24"><path d="M2.5 4.2l4.700-2.200 4.700 2.200v5l-4.700 2.400-4.700-2.400z" fill="#a9a9a9" stroke="#333" stroke-width=".7"/><path d="M2.5 4.2l4.700-2.200 4.700 2.200-4.700 2.200z" fill="#e6e6e6"/><path d="M7.2 6.4l4.700-2.200v5l-4.700 2.400z" fill="#666" opacity=".9"/><path d="M2.5 4.2l4.700 2.200 4.700-2.200M7.2 6.4v5.200" fill="none" stroke="#333" stroke-width=".6"/><path d="M11.8 4.2l4.700-2.200 4.700 2.200v5l-4.700 2.400-4.700-2.400z" fill="#fff" stroke="#333" stroke-width=".7"/><path d="M11.8 4.2l4.700-2.200 4.700 2.200-4.700 2.200z" fill="#fff"/><path d="M16.5 6.4l4.700-2.200v5l-4.700 2.400z" fill="#ececec" opacity=".9"/><path d="M11.8 4.2l4.700 2.200 4.700-2.200M16.5 6.4v5.200" fill="none" stroke="#333" stroke-width=".6"/><path d="M2.6 17.4h8M6.6 13.4v8" stroke="#4a5a3a" stroke-width="2.7" fill="none" opacity=".45"/><path d="M2.1 16.8h8M6.1 12.8v8" stroke="#7fee4e" stroke-width="2.7" fill="none"/><path d="M12.2 15.8L17.7 21.6" stroke="#3a78e6" stroke-width="1.700" fill="none"/><path d="M16.1 15.2A3.200 3.200 0 0 1 20.8 19.9" stroke="#3a78e6" stroke-width="1.800" fill="none"/></svg><svg class="ic" style="left:626.5px;top:66px" width="24" height="24" viewBox="0 0 24 24"><path d="M2.5 4.2l4.700-2.200 4.700 2.200v5l-4.700 2.400-4.700-2.400z" fill="#a9a9a9" stroke="#333" stroke-width=".7"/><path d="M2.5 4.2l4.700-2.200 4.700 2.200-4.700 2.200z" fill="#e6e6e6"/><path d="M7.2 6.4l4.700-2.200v5l-4.700 2.400z" fill="#666" opacity=".9"/><path d="M2.5 4.2l4.700 2.200 4.700-2.200M7.2 6.4v5.200" fill="none" stroke="#333" stroke-width=".6"/><path d="M11.8 4.2l4.700-2.200 4.700 2.200v5l-4.700 2.400-4.700-2.400z" fill="#fff" stroke="#333" stroke-width=".7"/><path d="M11.8 4.2l4.700-2.200 4.700 2.200-4.700 2.200z" fill="#fff"/><path d="M16.5 6.4l4.700-2.200v5l-4.700 2.400z" fill="#ececec" opacity=".9"/><path d="M11.8 4.2l4.700 2.200 4.700-2.200M16.5 6.4v5.200" fill="none" stroke="#333" stroke-width=".6"/><rect x="3.8" y="10" width="5.800" height="12.400" rx="2.400" fill="#0c0c0c"/><rect x="14.4" y="10" width="5.800" height="12.400" rx="2.400" fill="#0c0c0c"/><circle cx="6.7" cy="13.3" r="2.150" fill="#ffd21e"/><circle cx="6.7" cy="19.2" r="2.150" fill="#1ee01a"/><circle cx="17.3" cy="13.3" r="2.150" fill="#f01414"/><circle cx="17.3" cy="19.2" r="2.150" fill="#ffc21e"/></svg><svg class="ic" style="left:652px;top:66px" width="24" height="24" viewBox="0 0 24 24"><path d="M2.5 4.2l4.700-2.200 4.700 2.200v5l-4.700 2.400-4.700-2.400z" fill="#a9a9a9" stroke="#333" stroke-width=".7"/><path d="M2.5 4.2l4.700-2.200 4.700 2.200-4.700 2.200z" fill="#e6e6e6"/><path d="M7.2 6.4l4.700-2.200v5l-4.700 2.400z" fill="#666" opacity=".9"/><path d="M2.5 4.2l4.700 2.200 4.700-2.200M7.2 6.4v5.200" fill="none" stroke="#333" stroke-width=".6"/><path d="M11.8 4.2l4.700-2.200 4.700 2.200v5l-4.700 2.400-4.700-2.400z" fill="#fff" stroke="#333" stroke-width=".7"/><path d="M11.8 4.2l4.700-2.200 4.700 2.200-4.700 2.200z" fill="#fff"/><path d="M16.5 6.4l4.700-2.200v5l-4.700 2.400z" fill="#ececec" opacity=".9"/><path d="M11.8 4.2l4.700 2.200 4.700-2.200M16.5 6.4v5.200" fill="none" stroke="#333" stroke-width=".6"/><g transform="translate(12.5 15.5) scale(1.25)"><path d="M-6.5 0a6.5 5.5 0 0 1 11-3.8l2-2 .5 6.5-6.5-.6 2-1.9a3.8 3.2 0 0 0-6.2 1.8z" fill="#4cc02a" stroke="#2a7f14" stroke-width=".5"/><path d="M6.5 1a6.5 5.5 0 0 1-11 3.8l-2 2-.5-6.5 6.5.6-2 1.9a3.8 3.2 0 0 0 6.2-1.8z" fill="#f2de22" stroke="#a8920a" stroke-width=".5"/></g></svg><svg class="ic" style="left:678px;top:66px" width="24" height="24" viewBox="0 0 24 24"><path d="M2.5 4.2l4.700-2.200 4.700 2.200v5l-4.700 2.400-4.700-2.400z" fill="#a9a9a9" stroke="#333" stroke-width=".7"/><path d="M2.5 4.2l4.700-2.200 4.700 2.200-4.700 2.200z" fill="#e6e6e6"/><path d="M7.2 6.4l4.700-2.200v5l-4.700 2.400z" fill="#666" opacity=".9"/><path d="M2.5 4.2l4.700 2.200 4.700-2.200M7.2 6.4v5.200" fill="none" stroke="#333" stroke-width=".6"/><path d="M11.8 4.2l4.700-2.200 4.700 2.200v5l-4.700 2.400-4.700-2.400z" fill="#fff" stroke="#333" stroke-width=".7"/><path d="M11.8 4.2l4.700-2.200 4.700 2.200-4.700 2.200z" fill="#fff"/><path d="M16.5 6.4l4.700-2.200v5l-4.700 2.400z" fill="#ececec" opacity=".9"/><path d="M11.8 4.2l4.700 2.200 4.700-2.200M16.5 6.4v5.200" fill="none" stroke="#333" stroke-width=".6"/><path d="M2.7 16.1h6.6M6 12.8v6.6" stroke="#4a5a3a" stroke-width="2.3" fill="none" opacity=".45"/><path d="M2.2 15.5h6.6M5.5 12.2v6.6" stroke="#7fee4e" stroke-width="2.3" fill="none"/><path d="M9 21.500l5-8" stroke="#222" stroke-width="1.100"/><path d="M14.4 20.7h7" stroke="#8a8a10" stroke-width="2.3" fill="none" opacity=".5"/><path d="M14 20h7" stroke="#f6f000" stroke-width="2.3" fill="none"/></svg><svg class="ic" style="left:705px;top:66px" width="24" height="24" viewBox="0 0 24 24"><ellipse cx="15.5" cy="19.5" rx="6" ry="1.6" fill="#000" opacity=".35"/><path d="M7 5.7v12.6a5 2.2 0 0 0 10 0v-12.6" fill="url(#gBlue)" stroke="#16224a" stroke-width="1"/><ellipse cx="12" cy="5.7" rx="5" ry="2.2" fill="#5d8ad0" stroke="#16224a" stroke-width="1"/><path d="M12 7.5v12" stroke="#0a0a14" stroke-width="1.3" stroke-dasharray="3 2"/></svg><svg class="ic" style="left:731px;top:66px" width="24" height="24" viewBox="0 0 24 24"><ellipse cx="15.5" cy="19.5" rx="6" ry="1.6" fill="#000" opacity=".35"/><path d="M7 5.7v12.6a5 2.2 0 0 0 10 0v-12.6" fill="url(#gPale)" stroke="#16224a" stroke-width="1"/><ellipse cx="12" cy="5.7" rx="5" ry="2.2" fill="#8fb0e0" stroke="#16224a" stroke-width="1"/><path d="M10.5 7.5v13M13.5 7.5v13" stroke="#f4e63a" stroke-width="1.4"/><path d="M12 7.8v13" stroke="#5a6a9a" stroke-width=".8"/></svg><svg class="ic" style="left:758px;top:66px" width="24" height="24" viewBox="0 0 24 24"><ellipse cx="15.5" cy="19.5" rx="6" ry="1.6" fill="#000" opacity=".35"/><path d="M7 5.7v12.6a5 2.2 0 0 0 10 0v-12.6" fill="url(#gPale)" stroke="#46dcee" stroke-width="1.2"/><ellipse cx="12" cy="5.7" rx="5" ry="2.2" fill="#dfe7f6" stroke="#46dcee" stroke-width="1.2"/><path d="M7 18.3a5 2.2 0 0 1 10 0" fill="none" stroke="#46dcee" stroke-width="0.96" opacity=".8"/><path d="M8 11.5l3.5 5.5 6-10" fill="none" stroke="#3cb820" stroke-width="2.6" stroke-linecap="round" stroke-linejoin="round"/></svg><svg class="ic" style="left:783.5px;top:66px" width="24" height="24" viewBox="0 0 24 24"><ellipse cx="6" cy="19" rx="5" ry="1.5" fill="#000" opacity=".35"/><ellipse cx="15.5" cy="20" rx="6" ry="1.6" fill="#000" opacity=".35"/><path d="M7 6.2v12.6a5 2.2 0 0 0 10 0v-12.6" fill="url(#gPale)" stroke="#46dcee" stroke-width="1.2"/><ellipse cx="12" cy="6.2" rx="5" ry="2.2" fill="#dfe7f6" stroke="#46dcee" stroke-width="1.2"/><path d="M7 18.8a5 2.2 0 0 1 10 0" fill="none" stroke="#46dcee" stroke-width="0.96" opacity=".8"/><rect x="13.5" y="2" width="6" height="6" fill="#f2d8a0" stroke="#c8921a" stroke-width="1.1"/><circle cx="16" cy="5.5" r="1.5" fill="none" stroke="#e04020" stroke-width="1"/></svg><svg class="ic" style="left:809.5px;top:66px" width="24" height="24" viewBox="0 0 24 24"><path d="M7 5.7v12.6a5 2.2 0 0 0 10 0v-12.6" fill="#dbe7f8" stroke="#5a9be6" stroke-width="1"/><ellipse cx="12" cy="5.7" rx="5" ry="2.2" fill="#dbe7f8" stroke="#5a9be6" stroke-width="1"/><path d="M7 18.3a5 2.2 0 0 1 10 0" fill="none" stroke="#5a9be6" stroke-width="0.8" opacity=".8"/><path d="M9 6l2 14M11 6l3 14M14 6l-3 14M15.5 6l-2 14" stroke="#5a9be6" stroke-width=".7" fill="none"/></svg><svg class="ic" style="left:835px;top:66px" width="24" height="24" viewBox="0 0 24 24"><path d="M3 7.5l9-4 9 4-2.5 8.5-6.5 5-6.5-5z" fill="#2a50b8" stroke="#0d1838" stroke-width="1.1" stroke-linejoin="round"/><path d="M3 7.5l9-4 9 4-9 3.5z" fill="#6fa0ee"/><path d="M12 11l9-3.500-2.500 8.500-6.500 5z" fill="#1c3a94"/><path d="M3 7.5l9 3.500 9-3.500M12 11v10" fill="none" stroke="#0d1838" stroke-width=".9"/></svg><div class="lt cj" style="left:700.384px;top:92px">图像 (进阶)</div><div class="abs" style="left:869px;top:65px;width:3px;height:42px;background:radial-gradient(circle at 1px 1px,#fff 0.9px,rgba(255,255,255,0) 1.3px),radial-gradient(circle at 2px 2px,#9aa3b8 0.9px,rgba(0,0,0,0) 1.3px);background-size:3px 4px"></div><svg class="ic" style="left:877px;top:66px" width="24" height="24" viewBox="0 0 24 24"><g transform="translate(11.5 10.5) scale(0.95)"><path d="M0 3l6-3 6 3v7l-6 3-6-3z" fill="#8c8c8c" stroke="#444" stroke-width=".6"/><path d="M0 3l6-3 6 3-6 3z" fill="#d4d4d4"/><path d="M6 6l6-3v7l-6 3z" fill="#5e5e5e"/><path d="M0 3l6 3v7" fill="none" stroke="#444" stroke-width=".5"/></g><path d="M8.72 12.58l-5 5" stroke="#8a8f98" stroke-width="2.6" stroke-linecap="round"/><path d="M8.72 12.58l-5 5" stroke="#e8e8ec" stroke-width="1" stroke-linecap="round"/><circle cx="12.5" cy="8.8" r="5.4" fill="url(#gLens)" stroke="#8fa0bd" stroke-width="1.3"/><circle cx="12.500" cy="8.800" r="4.200" fill="#bcd2f0" opacity=".55"/><path d="M11 6.200l4.200 2.600-4.200 2.600z" fill="#dfeaf8" stroke="#7f9fd0" stroke-width=".7"/><path d="M2.500 4.500h4M4.500 2.500v4M2.500 8.500h4" stroke="#111" stroke-width="1"/></svg><svg class="ic" style="left:903px;top:66px" width="24" height="24" viewBox="0 0 24 24"><g transform="translate(11.5 10.5) scale(0.95)"><path d="M0 3l6-3 6 3v7l-6 3-6-3z" fill="#8c8c8c" stroke="#444" stroke-width=".6"/><path d="M0 3l6-3 6 3-6 3z" fill="#d4d4d4"/><path d="M6 6l6-3v7l-6 3z" fill="#5e5e5e"/><path d="M0 3l6 3v7" fill="none" stroke="#444" stroke-width=".5"/></g><path d="M8.72 12.58l-5 5" stroke="#8a8f98" stroke-width="2.6" stroke-linecap="round"/><path d="M8.72 12.58l-5 5" stroke="#e8e8ec" stroke-width="1" stroke-linecap="round"/><circle cx="12.5" cy="8.8" r="5.4" fill="url(#gLens)" stroke="#8fa0bd" stroke-width="1.3"/><circle cx="12.500" cy="8.800" r="4.200" fill="#bcd2f0" opacity=".55"/><path d="M11 6.200l4.200 2.600-4.200 2.600z" fill="#dfeaf8" stroke="#7f9fd0" stroke-width=".7"/><path d="M2.8 3.8L5 6" stroke="#35b81a" stroke-width="1.500"/><path d="M2 3L4.7 3L2 5.7Z" fill="#35b81a"/><path d="M5.8 6.8L3.1 6.8L5.8 4.1Z" fill="#35b81a"/><path d="M20.7 3.8L18.5 6" stroke="#35b81a" stroke-width="1.500"/><path d="M21.5 3L18.8 3L21.5 5.7Z" fill="#35b81a"/><path d="M17.7 6.8L20.4 6.8L17.7 4.1Z" fill="#35b81a"/><path d="M2.8 20.7L5 18.5" stroke="#35b81a" stroke-width="1.500"/><path d="M2 21.5L4.7 21.5L2 18.8Z" fill="#35b81a"/><path d="M5.8 17.7L3.1 17.7L5.8 20.4Z" fill="#35b81a"/><path d="M20.7 20.7L18.5 18.5" stroke="#35b81a" stroke-width="1.500"/><path d="M21.5 21.5L18.8 21.5L21.5 18.8Z" fill="#35b81a"/><path d="M17.7 17.7L20.4 17.7L17.7 20.4Z" fill="#35b81a"/></svg><svg class="ic" style="left:929px;top:66px" width="24" height="24" viewBox="0 0 24 24"><rect x="5.600" y="7.200" width="13.200" height="10" fill="url(#gPale)" stroke="#333" stroke-width="1"/><path d="M8.300 9.800l1.300-.7v5.700M7.800 14.800h3M14.800 9.800l1.300-.7v5.700M14.300 14.800h3" fill="none" stroke="#2a1a80" stroke-width="1.300"/><circle cx="12.300" cy="11" r=".8" fill="#2a1a80"/><circle cx="12.300" cy="13.800" r=".8" fill="#2a1a80"/><path d="M3.1 4.6L5.3 6.8" stroke="#35b81a" stroke-width="1.500"/><path d="M2.3 3.8L5 3.8L2.3 6.5Z" fill="#35b81a"/><path d="M6.1 7.6L3.4 7.6L6.1 4.9Z" fill="#35b81a"/><path d="M21.2 4.6L19 6.8" stroke="#35b81a" stroke-width="1.500"/><path d="M22 3.8L19.3 3.8L22 6.5Z" fill="#35b81a"/><path d="M18.2 7.6L20.9 7.6L18.2 4.9Z" fill="#35b81a"/><path d="M3.1 20L5.3 17.8" stroke="#35b81a" stroke-width="1.500"/><path d="M2.3 20.8L5 20.8L2.3 18.1Z" fill="#35b81a"/><path d="M6.1 17L3.4 17L6.1 19.7Z" fill="#35b81a"/><path d="M21.2 20L19 17.8" stroke="#35b81a" stroke-width="1.500"/><path d="M22 20.8L19.3 20.8L22 18.1Z" fill="#35b81a"/><path d="M18.2 17L20.9 17L18.2 19.7Z" fill="#35b81a"/></svg><svg class="ic" style="left:955.5px;top:66px" width="24" height="24" viewBox="0 0 24 24"><path d="M6.500 17.500L18 6" stroke="#2a8a1a" stroke-width="2.600" stroke-linecap="round"/><path d="M6.500 17.500L18 6" stroke="#7ae44e" stroke-width="1.200" stroke-linecap="round"/><path d="M13.800 4.800l7.200-1.300-1.400 7.300-2-2.300-1.500-1.400z" fill="#7ae44e" stroke="#2a8a1a" stroke-width=".9" stroke-linejoin="round"/><circle cx="5.800" cy="18" r="2.900" fill="url(#gBall)" stroke="#444" stroke-width=".5"/></svg><svg class="ic" style="left:981.5px;top:66px" width="24" height="24" viewBox="0 0 24 24"><path d="M5 12a7 8 0 0 1 10.500-7l1.500-2.500 2 7.500-7.500-1 2-2.200a4 5 0 0 0-5.500 5.200z" fill="#46c624" stroke="#2a8a12" stroke-width=".7"/><path d="M19 12a7 8 0 0 1-10.500 7l-1.500 2.500-2-7.500 7.500 1-2 2.200a4 5 0 0 0 5.500-5.200z" fill="#46c624" stroke="#2a8a12" stroke-width=".7"/></svg><svg class="ic" style="left:1007px;top:66px" width="24" height="24" viewBox="0 0 24 24"><g transform="translate(12 7) scale(1.1)"><path d="M-10 3.300Q-5 -3.800 0 -4Q6 -3.800 10 1.200Q4 4.200 -1 4Q-6 4.200 -10 3.300Z" fill="#c9cdee" stroke="#8a6a7a" stroke-width=".4"/><ellipse cx=".5" cy=".2" rx="4.600" ry="4" fill="url(#gIris)"/><circle cx=".4" cy="0" r="1.600" fill="#0e1428"/><circle cx="-.3" cy="-1.300" r=".9" fill="#cfe0ff"/><path d="M-10.200 3.500Q-5.500 -4.200 0 -4.800Q6.500 -4.600 10.400 1.400Q6 -1.900 0 -2.100Q-5 -1.800 -10.200 3.500Z" fill="#182034"/><path d="M-7 -1.600l-1.100-1.200M-4.500 -3.300l-.7-1.400M-1.700 -4.400l-.2-1.500M1.300 -4.600l.2-1.500M4 -4l.7-1.400M6.500 -2.700l1.100-1.200M8.600 -.8l1.300-.9" stroke="#182034" stroke-width="1.100" fill="none"/></g><circle cx="12" cy="15.5" r="5.800" fill="#ffd84a" stroke="#d89a10" stroke-width=".6"/><circle cx="10" cy="14" r=".9" fill="#222"/><circle cx="14" cy="14" r=".9" fill="#222"/><path d="M8.800 16.500q3.200 3.400 6.400 0" fill="none" stroke="#7a4a08" stroke-width=".9"/></svg><div class="lt cj" style="left:943px;top:92px">视图</div><div class="abs" style="left:1042px;top:65px;width:3px;height:42px;background:radial-gradient(circle at 1px 1px,#fff 0.9px,rgba(255,255,255,0) 1.3px),radial-gradient(circle at 2px 2px,#9aa3b8 0.9px,rgba(0,0,0,0) 1.3px);background-size:3px 4px"></div><svg class="ic" style="left:1050px;top:66px" width="24" height="24" viewBox="0 0 24 24"><path d="M2.5 13l7 -5 9 5 -7 5 z" fill="#eef2fb" stroke="#9aa4bc" stroke-width=".6"/><path d="M8.5 14v-8" stroke="#1a6cf0" stroke-width="1.4"/><path d="M8.5 3l-2 3.5 4 0z" fill="#1a6cf0"/><path d="M8.5 14l6 -5" stroke="#3cc420" stroke-width="1.4"/><path d="M17.5 6.5l-4 0.8 2.2 2.6z" fill="#3cc420"/><path d="M8.5 14l6 5" stroke="#e02020" stroke-width="1.4"/><path d="M17.5 21.5l-4 -0.8 2.2 -2.6z" fill="#e02020"/><circle cx="8.5" cy="14" r="1.9" fill="url(#gBall)" stroke="#555" stroke-width=".3"/></svg><svg class="ic" style="left:1077px;top:66px" width="24" height="24" viewBox="0 0 24 24"><path d="M11.4 7.4l4.2 -3 5.4 3 -4.2 3 z" fill="#eef2fb" stroke="#9aa4bc" stroke-width=".6"/><path d="M15 8v-4.8" stroke="#1a6cf0" stroke-width="0.84"/><path d="M15 1.4l-1.2 2.1 2.4 0z" fill="#1a6cf0"/><path d="M15 8l3.6 -3" stroke="#3cc420" stroke-width="0.84"/><path d="M20.4 3.5l-2.4 0.48 1.32 1.56z" fill="#3cc420"/><path d="M15 8l3.6 3" stroke="#e02020" stroke-width="0.84"/><path d="M20.4 12.5l-2.4 -0.48 1.32 -1.56z" fill="#e02020"/><circle cx="15" cy="8" r="1.14" fill="url(#gBall)" stroke="#555" stroke-width=".3"/><rect x="10" y="15" width="9" height="5" fill="#e4e4e4" stroke="#999" stroke-width="1"/><path d="M4 19l7-7-2.500-1.500 7-1-1 7-1.800-2.300-6.500 6.500z" fill="#46c624" stroke="#2a8a12" stroke-width=".7"/><circle cx="5" cy="19.500" r="2" fill="url(#gBall)" stroke="#555" stroke-width=".3"/></svg><svg class="ic" style="left:1102.5px;top:66px" width="24" height="24" viewBox="0 0 24 24"><path d="M11.9 8.4l4.2 -3 5.4 3 -4.2 3 z" fill="#eef2fb" stroke="#9aa4bc" stroke-width=".6"/><path d="M15.5 9v-4.8" stroke="#1a6cf0" stroke-width="0.84"/><path d="M15.5 2.4l-1.2 2.1 2.4 0z" fill="#1a6cf0"/><path d="M15.5 9l3.6 -3" stroke="#3cc420" stroke-width="0.84"/><path d="M20.9 4.5l-2.4 0.48 1.32 1.56z" fill="#3cc420"/><path d="M15.5 9l3.6 3" stroke="#e02020" stroke-width="0.84"/><path d="M20.9 13.5l-2.4 -0.48 1.32 -1.56z" fill="#e02020"/><circle cx="15.5" cy="9" r="1.14" fill="url(#gBall)" stroke="#555" stroke-width=".3"/><path d="M3 11l5-3v2.200l4 3.500-2.200 2.500-4-3.500-1.700 1.700z" fill="#46c624" stroke="#2a8a12" stroke-width=".6"/><path d="M12 22l-5 .5 1.300-1.800-4-3.500 2.200-2.500 4 3.500 1.800-1.300z" fill="#46c624" stroke="#2a8a12" stroke-width=".6"/></svg><div class="lt cj" style="left:1065px;top:92px">工作平面</div><div class="abs" style="left:1137px;top:65px;width:3px;height:42px;background:radial-gradient(circle at 1px 1px,#fff 0.9px,rgba(255,255,255,0) 1.3px),radial-gradient(circle at 2px 2px,#9aa3b8 0.9px,rgba(0,0,0,0) 1.3px);background-size:3px 4px"></div><svg class="ic" style="left:1145px;top:66px" width="24" height="24" viewBox="0 0 24 24"><rect x="2" y="3" width="20" height="19" fill="#8f96a8" opacity=".5"/><rect x="2.5" y="3.5" width="5.8" height="5.8" fill="#00d8f8"/><rect x="9.1" y="3.5" width="5.8" height="5.8" fill="#ffe000"/><rect x="15.7" y="3.5" width="5.8" height="5.8" fill="#00f020"/><rect x="2.5" y="10.1" width="5.8" height="5.8" fill="#ff8a00"/><rect x="9.1" y="10.1" width="5.8" height="5.8" fill="#a86a10"/><rect x="15.7" y="10.1" width="5.8" height="5.8" fill="#ff00f0"/><rect x="2.5" y="16.7" width="5.8" height="5.8" fill="#0010f0"/><rect x="9.1" y="16.7" width="5.8" height="5.8" fill="#00a838"/><rect x="15.7" y="16.7" width="5.8" height="5.8" fill="#8a8a8a"/></svg><svg class="ic" style="left:1171px;top:66px" width="24" height="24" viewBox="0 0 24 24"><rect x="4.500" y="2.500" width="15" height="19" fill="#f4f7fd" stroke="#7d8cab" stroke-width="1"/><rect x="6" y="4" width="12" height="1.800" fill="#5a9bf0"/><path d="M6.500 8h3.500M14 8h3.500" stroke="#ffb020" stroke-width="1.200"/><path d="M6.500 10.600h11" stroke="#b8e870" stroke-width="1.200"/><rect x="7.5" y="12.5" width="2.6" height="2.6" fill="#00d8f8"/><rect x="10.6" y="12.5" width="2.6" height="2.6" fill="#ffe000"/><rect x="13.7" y="12.5" width="2.6" height="2.6" fill="#00f020"/><rect x="7.5" y="15.6" width="2.6" height="2.6" fill="#ff8a00"/><rect x="10.6" y="15.6" width="2.6" height="2.6" fill="#a86a10"/><rect x="13.7" y="15.6" width="2.6" height="2.6" fill="#ff00f0"/><rect x="7.5" y="18.7" width="2.6" height="2.6" fill="#0010f0"/><rect x="10.6" y="18.7" width="2.6" height="2.6" fill="#00a838"/><rect x="13.7" y="18.7" width="2.6" height="2.6" fill="#8a8a8a"/></svg><svg class="ic" style="left:1197px;top:66px" width="24" height="24" viewBox="0 0 24 24"><circle cx="12" cy="12" r="9.500" fill="#5e9a3e" stroke="#3f6f2a" stroke-width="1"/><circle cx="12" cy="12" r="8" fill="#6fae4a"/><g transform="translate(12 12) scale(1.15)"><path d="M-6 6L4-4" stroke="#4f86d8" stroke-width="2.4" stroke-linecap="round"/><path d="M6 6L-3-3" stroke="#f1f3f6" stroke-width="2.2" stroke-linecap="round"/><path d="M-5.8-3.500a3 3 0 0 1 3.600-3.400l-1.800 1.900.6 1.700 1.800.5 1.800-1.800a3 3 0 0 1-3.600 3.500z" fill="#f1f3f6" stroke="#8a93a3" stroke-width=".4"/><path d="M3-5l3-1.500-1.400 3z" fill="#f1f3f6"/></g></svg><svg class="ic" style="left:1223px;top:66px" width="24" height="24" viewBox="0 0 24 24"><rect x="2.500" y="2.500" width="19" height="19" fill="#dbe7fa" stroke="#5b6f9a" stroke-width="1"/><rect x="3" y="3" width="18" height="3.500" fill="#3f78d0"/><path d="M7.500 8.500h2M10.500 8.500h2M13.500 8.500h2M16.500 8.500h2" stroke="#a8c020" stroke-width="2"/><path d="M5 11v1.500M5 14v1.500M5 17v1.500" stroke="#b06020" stroke-width="1.600"/><g transform="translate(13.5 15) scale(0.8)"><path d="M-6 6L4-4" stroke="#4f86d8" stroke-width="2.4" stroke-linecap="round"/><path d="M6 6L-3-3" stroke="#c8ccd4" stroke-width="2.2" stroke-linecap="round"/><path d="M-5.8-3.500a3 3 0 0 1 3.600-3.400l-1.800 1.900.6 1.700 1.800.5 1.800-1.800a3 3 0 0 1-3.600 3.500z" fill="#c8ccd4" stroke="#8a93a3" stroke-width=".4"/><path d="M3-5l3-1.500-1.400 3z" fill="#c8ccd4"/></g></svg><svg class="ic" style="left:1249px;top:66px" width="24" height="24" viewBox="0 0 24 24"><path d="M3 4h.1M3 20.500h.1M3 4h.1M21 4h.1" stroke="#2a4a80" stroke-width="1.800" stroke-linecap="round"/><path d="M7.5 4h.1M7.5 20.500h.1M3 8.1h.1M21 8.1h.1" stroke="#2a4a80" stroke-width="1.800" stroke-linecap="round"/><path d="M12 4h.1M12 20.500h.1M3 12.2h.1M21 12.2h.1" stroke="#2a4a80" stroke-width="1.800" stroke-linecap="round"/><path d="M16.5 4h.1M16.5 20.500h.1M3 16.3h.1M21 16.3h.1" stroke="#2a4a80" stroke-width="1.800" stroke-linecap="round"/><path d="M21 4h.1M21 20.500h.1M3 20.4h.1M21 20.4h.1" stroke="#2a4a80" stroke-width="1.800" stroke-linecap="round"/><path d="M9 14l5-7q2-2.500 4.500-1.500l2.500 1.500v4l-4 .5-3 3.500z" fill="#e8b86a" stroke="#a0702a" stroke-width=".7"/><circle cx="7.500" cy="17" r="3" fill="#f4e840"/><path d="M5.8 17.6h4.400M8 15.4v4.400" stroke="#4a5a3a" stroke-width="1.3" fill="none" opacity=".45"/><path d="M5.3 17h4.400M7.500 14.8v4.400" stroke="#2a78f0" stroke-width="1.3" fill="none"/></svg><svg class="ic" style="left:1275px;top:66px" width="24" height="24" viewBox="0 0 24 24"><path d="M7 22l14-2" stroke="#555" stroke-width="2.500" opacity=".5"/><path d="M7 4.500l13-1.500-4 15.500-13 1.500z" fill="#d84040" stroke="#2a6ae0" stroke-width="1.500" stroke-linejoin="round"/><path d="M10.200 4.200l-4 15.500M13.500 3.800l-4 15.500M16.800 3.500l-4 15.500M6 8.500l13-1.500M5 12.500l13-1.500M4 16.500l13-1.500" stroke="#f4b0b0" stroke-width=".8"/></svg><div class="lt cj" style="left:1211.5px;top:92px">系统</div>
<div class="abs" style="left:2px;top:121.5px;width:56px;height:3px;background:radial-gradient(circle at 1px 1px,#fff 0.9px,rgba(255,255,255,0) 1.3px),radial-gradient(circle at 2px 2px,#9aa3b8 0.9px,rgba(0,0,0,0) 1.3px);background-size:4px 3px"></div><div class="abs" style="left:2px;top:374.5px;width:56px;height:3px;background:radial-gradient(circle at 1px 1px,#fff 0.9px,rgba(255,255,255,0) 1.3px),radial-gradient(circle at 2px 2px,#9aa3b8 0.9px,rgba(0,0,0,0) 1.3px);background-size:4px 3px"></div><svg class="ic" style="left:5.5px;top:131.5px" width="24" height="24" viewBox="0 0 24 24"><path d="M5 6l7 4M3.500 10l7 3M4 14l6 1.500" stroke="#b4bed4" stroke-width="1.600" stroke-linecap="round"/><ellipse cx="16" cy="19.500" rx="4.500" ry="1.300" fill="#000" opacity=".2"/><path d="M12 14.65l-5 4.5" stroke="#8a8f98" stroke-width="2.6" stroke-linecap="round"/><path d="M12 14.65l-5 4.5" stroke="#e8e8ec" stroke-width="1" stroke-linecap="round"/><circle cx="15.5" cy="11.5" r="5" fill="url(#gLens)" stroke="#8fa0bd" stroke-width="1.3"/></svg><svg class="ic" style="left:31.5px;top:131.5px" width="24" height="24" viewBox="0 0 24 24"><path d="M4 5l13 14M4 13l9-9" stroke="#3a7ae0" stroke-width="1.500"/><path d="M7.41062 14.9294 L16.481 4.46349 L18.8992 6.55927 L9.82882 17.0251 L7.41062 14.9294 Z" fill="#f0a030" stroke="#8a4a10" stroke-width=".5"/><path d="M6 19 L7.41062 14.9294 L9.82882 17.0251 Z" fill="#f6dcae" stroke="#8a4a10" stroke-width=".4"/><path d="M6 19 L6.52898 17.4735 L7.43581 18.2594 Z" fill="#222"/><path d="M16.481 4.46349 L17.7909 2.95211 L20.2091 5.04789 L18.8992 6.55927 Z" fill="#c03030" stroke="#701010" stroke-width=".4"/></svg><svg class="ic" style="left:48px;top:132.5px" width="5" height="3"><path d="M0 0h5L2.5 3z" fill="#000"/></svg><svg class="ic" style="left:5.5px;top:157.5px" width="24" height="24" viewBox="0 0 24 24"><rect x="6.300" y="7.300" width="12.400" height="10.600" fill="url(#gPale)" stroke="#8a94ac" stroke-width=".9"/><path d="M3.6 4.3L6.2 6.9" stroke="#35b81a" stroke-width="1.500"/><path d="M2.8 3.5L5.5 3.5L2.8 6.2Z" fill="#35b81a"/><path d="M7 7.7L4.3 7.7L7 5Z" fill="#35b81a"/><path d="M21.2 4.3L18.6 6.9" stroke="#35b81a" stroke-width="1.500"/><path d="M22 3.5L19.3 3.5L22 6.2Z" fill="#35b81a"/><path d="M17.8 7.7L20.5 7.7L17.8 5Z" fill="#35b81a"/><path d="M3.6 20.7L6.2 18.1" stroke="#35b81a" stroke-width="1.500"/><path d="M2.8 21.5L5.5 21.5L2.8 18.8Z" fill="#35b81a"/><path d="M7 17.3L4.3 17.3L7 20Z" fill="#35b81a"/><path d="M21.2 20.7L18.6 18.1" stroke="#35b81a" stroke-width="1.500"/><path d="M22 21.5L19.3 21.5L22 18.8Z" fill="#35b81a"/><path d="M17.8 17.3L20.5 17.3L17.8 20Z" fill="#35b81a"/></svg><svg class="ic" style="left:31.5px;top:157.5px" width="24" height="24" viewBox="0 0 24 24"><path d="M5 9q-2-5 3-5 5 1 2 7-3 7 4 8 6 0 5-5" fill="none" stroke="#3a7ae0" stroke-width="1.600"/><path d="M7.41062 14.9294 L16.481 4.46349 L18.8992 6.55927 L9.82882 17.0251 L7.41062 14.9294 Z" fill="#f0a030" stroke="#8a4a10" stroke-width=".5"/><path d="M6 19 L7.41062 14.9294 L9.82882 17.0251 Z" fill="#f6dcae" stroke="#8a4a10" stroke-width=".4"/><path d="M6 19 L6.52898 17.4735 L7.43581 18.2594 Z" fill="#222"/><path d="M16.481 4.46349 L17.7909 2.95211 L20.2091 5.04789 L18.8992 6.55927 Z" fill="#c03030" stroke="#701010" stroke-width=".4"/></svg><svg class="ic" style="left:48px;top:158.5px" width="5" height="3"><path d="M0 0h5L2.5 3z" fill="#000"/></svg><svg class="ic" style="left:5.5px;top:183.5px" width="24" height="24" viewBox="0 0 24 24"><g transform="translate(11.5 10.5) scale(0.95)"><path d="M0 3l6-3 6 3v7l-6 3-6-3z" fill="#8c8c8c" stroke="#444" stroke-width=".6"/><path d="M0 3l6-3 6 3-6 3z" fill="#d4d4d4"/><path d="M6 6l6-3v7l-6 3z" fill="#5e5e5e"/><path d="M0 3l6 3v7" fill="none" stroke="#444" stroke-width=".5"/></g><path d="M8.72 12.58l-5 5" stroke="#8a8f98" stroke-width="2.6" stroke-linecap="round"/><path d="M8.72 12.58l-5 5" stroke="#e8e8ec" stroke-width="1" stroke-linecap="round"/><circle cx="12.5" cy="8.8" r="5.4" fill="url(#gLens)" stroke="#8fa0bd" stroke-width="1.3"/><circle cx="12.500" cy="8.800" r="4.200" fill="#bcd2f0" opacity=".55"/><path d="M11 6.200l4.200 2.600-4.200 2.600z" fill="#dfeaf8" stroke="#7f9fd0" stroke-width=".7"/><path d="M2.500 4.500h4M4.500 2.500v4M2.500 8.500h4" stroke="#111" stroke-width="1"/></svg><svg class="ic" style="left:22px;top:184.5px" width="5" height="3"><path d="M0 0h5L2.5 3z" fill="#000"/></svg><svg class="ic" style="left:31.5px;top:183.5px" width="24" height="24" viewBox="0 0 24 24"><rect x="4.500" y="4" width="13.500" height="16" fill="#eef1e0" stroke="#f4e800" stroke-width="1.700"/><rect x="13.500" y="15.500" width="6" height="5" fill="#d6dbe9" stroke="#f4e800" stroke-width="1.200"/><path d="M7 12l3.500 4.500 7-10" fill="none" stroke="#3cb820" stroke-width="2.800" stroke-linecap="round" stroke-linejoin="round"/></svg><svg class="ic" style="left:48px;top:184.5px" width="5" height="3"><path d="M0 0h5L2.5 3z" fill="#000"/></svg><svg class="ic" style="left:5.5px;top:209.5px" width="24" height="24" viewBox="0 0 24 24"><path d="M2.5 13l7 -5 9 5 -7 5 z" fill="#eef2fb" stroke="#9aa4bc" stroke-width=".6"/><path d="M8.5 14v-8" stroke="#1a6cf0" stroke-width="1.4"/><path d="M8.5 3l-2 3.5 4 0z" fill="#1a6cf0"/><path d="M8.5 14l6 -5" stroke="#3cc420" stroke-width="1.4"/><path d="M17.5 6.5l-4 0.8 2.2 2.6z" fill="#3cc420"/><path d="M8.5 14l6 5" stroke="#e02020" stroke-width="1.4"/><path d="M17.5 21.5l-4 -0.8 2.2 -2.6z" fill="#e02020"/><circle cx="8.5" cy="14" r="1.9" fill="url(#gBall)" stroke="#555" stroke-width=".3"/></svg><svg class="ic" style="left:22px;top:210.5px" width="5" height="3"><path d="M0 0h5L2.5 3z" fill="#000"/></svg><svg class="ic" style="left:31.5px;top:209.5px" width="24" height="24" viewBox="0 0 24 24"><path d="M4 13q1-9 5-6 3 3 4 8 2 6 6 1 1-3 0-7" fill="none" stroke="#3a7ae0" stroke-width="1.600"/><path d="M7.41062 14.9294 L16.481 4.46349 L18.8992 6.55927 L9.82882 17.0251 L7.41062 14.9294 Z" fill="#f0a030" stroke="#8a4a10" stroke-width=".5"/><path d="M6 19 L7.41062 14.9294 L9.82882 17.0251 Z" fill="#f6dcae" stroke="#8a4a10" stroke-width=".4"/><path d="M6 19 L6.52898 17.4735 L7.43581 18.2594 Z" fill="#222"/><path d="M16.481 4.46349 L17.7909 2.95211 L20.2091 5.04789 L18.8992 6.55927 Z" fill="#c03030" stroke="#701010" stroke-width=".4"/></svg><svg class="ic" style="left:48px;top:210.5px" width="5" height="3"><path d="M0 0h5L2.5 3z" fill="#000"/></svg><svg class="ic" style="left:5.5px;top:235.5px" width="24" height="24" viewBox="0 0 24 24"><path d="M2 4h11l2 2H4z" fill="#b9c6ee" stroke="#6878b8" stroke-width=".5"/><path d="M2 7h11l2 2H4z" fill="#dfe4f4" stroke="#6878b8" stroke-width=".5"/><path d="M3 10h10l2 2H5z" fill="#f2f4fa" stroke="#8a93b8" stroke-width=".5"/><ellipse cx="12.5" cy="18" rx="7.5" ry="4.6" fill="#b98c5a" stroke="#6b4a28" stroke-width=".7"/><circle cx="8.5" cy="18.5" r="1.7" fill="#2050e0"/><circle cx="12.5" cy="19.8" r="1.7" fill="#e02020"/><circle cx="16" cy="17.6" r="1.7" fill="#20b820"/><path d="M13 15L20 4" stroke="#a0602a" stroke-width="1.6" stroke-linecap="round"/><path d="M12.2 16.5l1.6-2.6 1 .7z" fill="#333"/></svg><svg class="ic" style="left:22px;top:236.5px" width="5" height="3"><path d="M0 0h5L2.5 3z" fill="#000"/></svg><svg class="ic" style="left:31.5px;top:235.5px" width="24" height="24" viewBox="0 0 24 24"><path d="M8 4l13-1-4 15-14 2z" fill="#8fbaf0" stroke="#2a6ae0" stroke-width="1.300" stroke-linejoin="round"/><path d="M9 5l11-.8-1.500 5.500-11.500 1z" fill="#d4e6fb" opacity=".8"/><path d="M14.500 3.500l-4.500 15.500M5.500 12l13.500-1.500" stroke="#2a6ae0" stroke-width="1"/></svg><svg class="ic" style="left:48px;top:236.5px" width="5" height="3"><path d="M0 0h5L2.5 3z" fill="#000"/></svg><svg class="ic" style="left:5.5px;top:261.5px" width="24" height="24" viewBox="0 0 24 24"><g transform="translate(12 12.5) scale(1)"><path d="M-7 -.5a7 6.5 0 0 1 11.5-4.5l2-2 .5 7-7-.6 2.2-2.2a4 3.6 0 0 0-6.4 2.3z" fill="#7fb0ea" stroke="#3d78c8" stroke-width=".6"/><path d="M7 .5a7 6.5 0 0 1-11.5 4.5l-2 2-.5-7 7 .6-2.2 2.2a4 3.6 0 0 0 6.4-2.3z" fill="#5e98e0" stroke="#3d78c8" stroke-width=".6"/></g></svg><svg class="ic" style="left:22px;top:262.5px" width="5" height="3"><path d="M0 0h5L2.5 3z" fill="#000"/></svg><svg class="ic" style="left:31.5px;top:261.5px" width="24" height="24" viewBox="0 0 24 24"><g transform="translate(4 5) scale(1.35)"><path d="M0 3l6-3 6 3v7l-6 3-6-3z" fill="#8c8c8c" stroke="#444" stroke-width=".6"/><path d="M0 3l6-3 6 3-6 3z" fill="#d4d4d4"/><path d="M6 6l6-3v7l-6 3z" fill="#5e5e5e"/><path d="M0 3l6 3v7" fill="none" stroke="#444" stroke-width=".5"/></g></svg><svg class="ic" style="left:48px;top:262.5px" width="5" height="3"><path d="M0 0h5L2.5 3z" fill="#000"/></svg><svg class="ic" style="left:5.5px;top:287.5px" width="24" height="24" viewBox="0 0 24 24"><ellipse cx="12" cy="21" rx="5" ry="1.300" fill="#000" opacity=".2"/><path d="M7.500 8.500q0-5 4.800-5 4.700 0 4.700 4.200 0 2.800-2.600 4.300-1.400.9-1.400 2.800h-3q0-3 2-4.400 1.800-1.200 1.800-2.700 0-1.700-1.600-1.700-1.800 0-1.800 2.500z" fill="#4a7ad8" stroke="#2a4a98" stroke-width=".6"/><circle cx="11.500" cy="18.300" r="1.800" fill="#4a7ad8" stroke="#2a4a98" stroke-width=".6"/></svg><svg class="ic" style="left:22px;top:288.5px" width="5" height="3"><path d="M0 0h5L2.5 3z" fill="#000"/></svg><svg class="ic" style="left:31.5px;top:287.5px" width="24" height="24" viewBox="0 0 24 24"><path d="M3.500 5v15M20.500 5v15" stroke="#222" stroke-width="1.200"/><path d="M5 8h14" stroke="#f0dc00" stroke-width="1.600"/><path d="M4 8l3.500-2.300v4.600zM20 8l-3.500-2.300v4.600z" fill="#f0dc00" stroke="#8a7a00" stroke-width=".3"/></svg><svg class="ic" style="left:48px;top:288.5px" width="5" height="3"><path d="M0 0h5L2.5 3z" fill="#000"/></svg><svg class="ic" style="left:5.5px;top:313.5px" width="24" height="24" viewBox="0 0 24 24"><path d="M5.500 8h13l-1.500 13h-10z" fill="#bcd6f4" stroke="#6f8cb8" stroke-width=".9"/><ellipse cx="12" cy="8" rx="6.800" ry="2" fill="#dcecfb" stroke="#6f8cb8" stroke-width=".9"/><path d="M9 12l3 3-3 3M15 12l-3 3 3 3" stroke="#6fcf50" stroke-width="1.400" fill="none"/><path d="M11 3l1.500 3.500 1.500-3z" fill="#f0d020"/></svg><svg class="ic" style="left:22px;top:314.5px" width="5" height="3"><path d="M0 0h5L2.5 3z" fill="#000"/></svg><svg class="ic" style="left:31.5px;top:313.5px" width="24" height="24" viewBox="0 0 24 24"><path d="M6 9.500l5.500-5.500v3.500q8 .5 7 8-.5 3.500-4.500 5 3-4 .5-6.800-1.200-1.200-3-1.200v3.500z" fill="#b4b8c2" stroke="#8a8e98" stroke-width=".7"/></svg><svg class="ic" style="left:48px;top:314.5px" width="5" height="3"><path d="M0 0h5L2.5 3z" fill="#000"/></svg><svg class="ic" style="left:5.5px;top:339.5px" width="24" height="24" viewBox="0 0 24 24"><path d="M5 3v16" stroke="#333" stroke-width="1.500"/><circle cx="13" cy="11" r="6.500" fill="none" stroke="#8a5a20" stroke-width="1.600"/><circle cx="13" cy="11" r="1.800" fill="#8a5a20"/><path d="M13 2v18M4 11h18M6.600 4.600l12.800 12.800M19.400 4.600L6.600 17.400" stroke="#8a5a20" stroke-width="1"/><path d="M3 21l4-4 4 1 4-2 4 1-3 4-5 1z" fill="#ff9a1a" stroke="#d86a00" stroke-width=".6"/><path d="M5 22l14-5M8 23l9-6" stroke="#fff" stroke-width=".6"/></svg><svg class="ic" style="left:22px;top:340.5px" width="5" height="3"><path d="M0 0h5L2.5 3z" fill="#000"/></svg><svg class="ic" style="left:31.5px;top:339.5px" width="24" height="24" viewBox="0 0 24 24"><rect x="8" y="12" width="14" height="10" fill="#fff" stroke="#222" stroke-width="1"/><g transform="translate(2 3) scale(1.2)"><path d="M0 3h4l1 1.5h7v8H0z" fill="#e9c35a" stroke="#b88a1e" stroke-width=".6"/><path d="M0 12.5l2.5-6.5h11.5l-2.5 6.5z" fill="url(#gYel)" stroke="#b88a1e" stroke-width=".6"/></g><rect x="11" y="3" width="8" height="6" fill="#38b048" stroke="#1f7a2c" stroke-width=".6"/><path d="M12 7q2-3 5-2" stroke="#fff" stroke-width=".8" fill="none"/></svg>
<div class="abs" style="left:64px;top:113px;width:24px;height:24px;background:#8b90a6"></div><svg class="ic" style="left:64px;top:113px" width="24" height="24" viewBox="0 0 24 24"><path d="M3.200 5.700h17.700M3.200 11.900h17.700M3.200 18h17.700" stroke="#5873a6" stroke-width="3.700"/><path d="M3.800 5.700h16.500M3.800 11.900h16.500M3.800 18h16.500" stroke="#425d90" stroke-width="2.300"/></svg><div class="abs" style="left:92px;top:113px;width:24px;height:24px;background:#8b90a6"></div><svg class="ic" style="left:92px;top:113px" width="24" height="24" viewBox="0 0 24 24"><rect x="7.300" y="8" width="11.400" height="9.300" fill="#5a5f70"/><rect x="6.800" y="7.500" width="11.200" height="9" fill="url(#gPale)" stroke="#f4f6fc" stroke-width=".6"/><path d="M3.8 4.4L6.4 7" stroke="#3fc81f" stroke-width="1.500"/><path d="M3 3.6L5.7 3.6L3 6.3Z" fill="#3fc81f"/><path d="M7.2 7.8L4.5 7.8L7.2 5.1Z" fill="#3fc81f"/><path d="M21.2 4.4L18.6 7" stroke="#3fc81f" stroke-width="1.500"/><path d="M22 3.6L19.3 3.6L22 6.3Z" fill="#3fc81f"/><path d="M17.8 7.8L20.5 7.8L17.8 5.1Z" fill="#3fc81f"/><path d="M3.8 20.6L6.4 18" stroke="#3fc81f" stroke-width="1.500"/><path d="M3 21.4L5.7 21.4L3 18.7Z" fill="#3fc81f"/><path d="M7.2 17.2L4.5 17.2L7.2 19.9Z" fill="#3fc81f"/><path d="M21.2 20.6L18.6 18" stroke="#3fc81f" stroke-width="1.500"/><path d="M22 21.4L19.3 21.4L22 18.7Z" fill="#3fc81f"/><path d="M17.8 17.2L20.5 17.2L17.8 19.9Z" fill="#3fc81f"/></svg><div class="abs" style="left:120px;top:113px;width:24px;height:24px;background:#8b90a6"></div><svg class="ic" style="left:120px;top:113px" width="24" height="24" viewBox="0 0 24 24"><path d="M6 5.500l7 4M4.500 9.500l7 3M5 13.500l6 1.500" stroke="#c9d2e6" stroke-width="1.600" stroke-linecap="round" opacity=".85"/><ellipse cx="17" cy="18.500" rx="4.500" ry="1.300" fill="#000" opacity=".3"/><path d="M12.91 15.161l-5 4.5" stroke="#8a8f98" stroke-width="2.6" stroke-linecap="round"/><path d="M12.91 15.161l-5 4.5" stroke="#e8e8ec" stroke-width="1" stroke-linecap="round"/><circle cx="16.2" cy="12.2" r="4.7" fill="url(#gLens)" stroke="#8fa0bd" stroke-width="1.3"/></svg><div class="abs" style="left:148px;top:113px;width:24px;height:24px;background:#8b90a6"></div><svg class="ic" style="left:148px;top:113px" width="24" height="24" viewBox="0 0 24 24"><path d="M2.500 14l12.500-9 6.500 3.500M2.500 14l9.500 7.700 9-9" fill="none" stroke="#5f6478" stroke-width=".6"/><path d="M10.8 14.7v-7.6" stroke="#1a6cf0" stroke-width="1.33"/><path d="M10.8 4.25l-1.9 3.325 3.8 0z" fill="#1a6cf0"/><path d="M10.8 14.7l5.7 -4.75" stroke="#3cc420" stroke-width="1.33"/><path d="M19.35 7.575l-3.8 0.76 2.09 2.47z" fill="#3cc420"/><path d="M10.8 14.7l5.7 4.75" stroke="#e02020" stroke-width="1.33"/><path d="M19.35 21.825l-3.8 -0.76 2.09 -2.47z" fill="#e02020"/><circle cx="10.8" cy="14.7" r="1.805" fill="url(#gBall)" stroke="#555" stroke-width=".3"/></svg><div class="abs" style="left:176px;top:113px;width:24px;height:24px;background:#8b90a6"></div><svg class="ic" style="left:176px;top:113px" width="24" height="24" viewBox="0 0 24 24"><path d="M12.5 11.9L3.5 16.7M12.5 11.9L21.5 16.7M12.5 11.9L12.5 3" fill="none" stroke="#050505" stroke-width="1.1" stroke-linejoin="round" stroke-linecap="round"/><path d="M3.5 6.5 L12.5 10.8 L21.5 6.5 L12.5 3 z" fill="#3fd41c"/><path d="M3.5 6.5L12.5 10.8M12.5 10.8L21.5 6.5M21.5 6.5L12.5 3M12.5 3L3.5 6.5M3.5 16.7L12.5 21.5M12.5 21.5L21.5 16.7M3.5 6.5L3.5 16.7M12.5 10.8L12.5 21.5M21.5 6.5L21.5 16.7" fill="none" stroke="#050505" stroke-width="1.3" stroke-linejoin="round" stroke-linecap="round"/></svg><div class="abs" style="left:204px;top:113px;width:24px;height:24px;background:#8b90a6"></div><svg class="ic" style="left:204px;top:113px" width="24" height="24" viewBox="0 0 24 24"><path d="M12.5 11.9L3.5 16.7M12.5 11.9L21.5 16.7M12.5 11.9L12.5 3" fill="none" stroke="#050505" stroke-width="1.1" stroke-linejoin="round" stroke-linecap="round"/><path d="M3.5 16.7 L12.5 21.5 L21.5 16.7 L12.5 11.9 z" fill="#27b010"/><path d="M3.5 6.5L12.5 10.8M12.5 10.8L21.5 6.5M21.5 6.5L12.5 3M12.5 3L3.5 6.5M3.5 16.7L12.5 21.5M12.5 21.5L21.5 16.7M3.5 6.5L3.5 16.7M12.5 10.8L12.5 21.5M21.5 6.5L21.5 16.7" fill="none" stroke="#050505" stroke-width="1.3" stroke-linejoin="round" stroke-linecap="round"/></svg><div class="abs" style="left:232px;top:113px;width:24px;height:24px;background:#8b90a6"></div><svg class="ic" style="left:232px;top:113px" width="24" height="24" viewBox="0 0 24 24"><path d="M12.5 11.9L3.5 16.7M12.5 11.9L21.5 16.7M12.5 11.9L12.5 3" fill="none" stroke="#050505" stroke-width="1.1" stroke-linejoin="round" stroke-linecap="round"/><path d="M3.5 6.5 L12.5 3 L12.5 11.9 L3.5 16.7 z" fill="#27b010"/><path d="M3.5 6.5L12.5 10.8M12.5 10.8L21.5 6.5M21.5 6.5L12.5 3M12.5 3L3.5 6.5M3.5 16.7L12.5 21.5M12.5 21.5L21.5 16.7M3.5 6.5L3.5 16.7M12.5 10.8L12.5 21.5M21.5 6.5L21.5 16.7" fill="none" stroke="#050505" stroke-width="1.3" stroke-linejoin="round" stroke-linecap="round"/></svg><div class="abs" style="left:260px;top:113px;width:24px;height:24px;background:#8b90a6"></div><svg class="ic" style="left:260px;top:113px" width="24" height="24" viewBox="0 0 24 24"><path d="M12.5 11.9L3.5 16.7M12.5 11.9L21.5 16.7M12.5 11.9L12.5 3" fill="none" stroke="#050505" stroke-width="1.1" stroke-linejoin="round" stroke-linecap="round"/><path d="M12.5 10.8 L21.5 6.5 L21.5 16.7 L12.5 21.5 z" fill="#27b010"/><path d="M3.5 6.5L12.5 10.8M12.5 10.8L21.5 6.5M21.5 6.5L12.5 3M12.5 3L3.5 6.5M3.5 16.7L12.5 21.5M12.5 21.5L21.5 16.7M3.5 6.5L3.5 16.7M12.5 10.8L12.5 21.5M21.5 6.5L21.5 16.7" fill="none" stroke="#050505" stroke-width="1.3" stroke-linejoin="round" stroke-linecap="round"/></svg><div class="abs" style="left:288px;top:113px;width:24px;height:24px;background:#8b90a6"></div><svg class="ic" style="left:288px;top:113px" width="24" height="24" viewBox="0 0 24 24"><path d="M12.5 11.9L3.5 16.7M12.5 11.9L21.5 16.7M12.5 11.9L12.5 3" fill="none" stroke="#050505" stroke-width="1.1" stroke-linejoin="round" stroke-linecap="round"/><path d="M3.5 6.5 L12.5 10.8 L12.5 21.5 L3.5 16.7 z" fill="#35c418"/><path d="M3.5 6.5L12.5 10.8M12.5 10.8L21.5 6.5M21.5 6.5L12.5 3M12.5 3L3.5 6.5M3.5 16.7L12.5 21.5M12.5 21.5L21.5 16.7M3.5 6.5L3.5 16.7M12.5 10.8L12.5 21.5M21.5 6.5L21.5 16.7" fill="none" stroke="#050505" stroke-width="1.3" stroke-linejoin="round" stroke-linecap="round"/></svg><div class="abs" style="left:316px;top:113px;width:24px;height:24px;background:#8b90a6"></div><svg class="ic" style="left:316px;top:113px" width="24" height="24" viewBox="0 0 24 24"><path d="M12.5 11.9L3.5 16.7M12.5 11.9L21.5 16.7M12.5 11.9L12.5 3" fill="none" stroke="#050505" stroke-width="1.1" stroke-linejoin="round" stroke-linecap="round"/><path d="M12.5 3 L21.5 6.5 L21.5 16.7 L12.5 11.9 z" fill="#35c418"/><path d="M3.5 6.5L12.5 10.8M12.5 10.8L21.5 6.5M21.5 6.5L12.5 3M12.5 3L3.5 6.5M3.5 16.7L12.5 21.5M12.5 21.5L21.5 16.7M3.5 6.5L3.5 16.7M12.5 10.8L12.5 21.5M21.5 6.5L21.5 16.7" fill="none" stroke="#050505" stroke-width="1.3" stroke-linejoin="round" stroke-linecap="round"/></svg><div class="abs" style="left:344px;top:113px;width:24px;height:24px;background:#8b90a6"></div><svg class="ic" style="left:344px;top:113px" width="24" height="24" viewBox="0 0 24 24"><path d="M3.300 6.500l9.200-3.500 9.200 3.500v10.200l-9.200 4.800-9.200-4.800z" fill="#35c418" stroke="#1d8a10" stroke-width=".8" stroke-linejoin="round"/><path d="M3.300 6.500l9.200-3.500 9.200 3.500-9.200 4.300z" fill="#5ce838"/><path d="M12.500 10.800l9.200-4.300v10.200l-9.200 4.800z" fill="#27a810"/></svg><div class="abs" style="left:64px;top:141px;width:24px;height:24px;background:#8b90a6"></div><svg class="ic" style="left:64px;top:141px" width="24" height="24" viewBox="0 0 24 24"><path d="M8.3 6.4v12.2a5.2 2.2 0 0 0 10.4 0v-12.2" fill="none" stroke="#1c1c1c" stroke-width="1"/><ellipse cx="13.5" cy="6.4" rx="5.2" ry="2.2" fill="none" stroke="#1c1c1c" stroke-width="1"/><path d="M8.3 18.6a5.2 2.2 0 0 1 10.4 0" fill="none" stroke="#1c1c1c" stroke-width="0.8" opacity=".8"/></svg><div class="abs" style="left:64px;top:169px;width:24px;height:24px;background:#8b90a6"></div><svg class="ic" style="left:64px;top:169px" width="24" height="24" viewBox="0 0 24 24"><path d="M8.3 6.4v12.2a5.2 2.2 0 0 0 10.4 0v-12.2" fill="none" stroke="#1c1c1c" stroke-width="1"/><ellipse cx="13.5" cy="6.4" rx="5.2" ry="2.2" fill="none" stroke="#1c1c1c" stroke-width="1"/><path d="M8.3 18.6a5.2 2.2 0 0 1 10.4 0" fill="none" stroke="#1c1c1c" stroke-width="0.8" opacity=".8"/></svg><div class="abs" style="left:64px;top:197px;width:24px;height:24px;background:#a89a62;border:1px solid #f0c850;box-sizing:border-box"></div><svg class="ic" style="left:64px;top:197px" width="24" height="24" viewBox="0 0 24 24"><path d="M8.3 6.4v12.2a5.2 2.2 0 0 0 10.4 0v-12.2" fill="url(#gBlue)" stroke="#16224a" stroke-width="0.9"/><ellipse cx="13.5" cy="6.4" rx="5.2" ry="2.2" fill="#4a78c6" stroke="#16224a" stroke-width="0.9"/></svg><div class="abs" style="left:64px;top:225px;width:24px;height:24px;background:#8b90a6"></div><svg class="ic" style="left:64px;top:225px" width="24" height="24" viewBox="0 0 24 24"><path d="M8.3 6.4v12.2a5.2 2.2 0 0 0 10.4 0v-12.2" fill="url(#gPale)" stroke="#3a4258" stroke-width="0.9"/><ellipse cx="13.5" cy="6.4" rx="5.2" ry="2.2" fill="#e8eefa" stroke="#3a4258" stroke-width="0.9"/><path d="M8.3 18.6a5.2 2.2 0 0 1 10.4 0" fill="none" stroke="#3a4258" stroke-width="0.72" opacity=".8"/></svg><div class="abs" style="left:64px;top:253px;width:24px;height:24px;background:#8b90a6"></div><svg class="ic" style="left:64px;top:253px" width="24" height="24" viewBox="0 0 24 24"><path d="M8.3 6.4v12.2a5.2 2.2 0 0 0 10.4 0v-12.2" fill="none" stroke="#1c1c1c" stroke-width="1"/><ellipse cx="13.5" cy="6.4" rx="5.2" ry="2.2" fill="none" stroke="#1c1c1c" stroke-width="1"/><path d="M8.3 18.6a5.2 2.2 0 0 1 10.4 0" fill="none" stroke="#1c1c1c" stroke-width="0.8" opacity=".8"/><path d="M10.500 7l1.500 13M12.300 7l3 13M15 7l-2.800 13M17 7l-1.500 13" stroke="#1c1c1c" stroke-width=".6" fill="none"/></svg>
<svg class="ic" style="left:680px;top:200px" width="500" height="630" viewBox="680 200 500 630" shape-rendering="crispEdges"><defs><radialGradient id="mBtn" cx=".82" cy=".42" r=".9"><stop offset="0" stop-color="#fff"/><stop offset=".25" stop-color="#e4e4e4"/><stop offset=".6" stop-color="#b0b0b0"/><stop offset="1" stop-color="#8e8e8e"/></radialGradient><linearGradient id="mBtnL" x1="0" y1="0" x2="1" y2=".4"><stop offset="0" stop-color="#2a2a2a"/><stop offset=".35" stop-color="#5a5a5a"/><stop offset=".7" stop-color="#a0a0a0"/><stop offset="1" stop-color="#c4c4c4"/></linearGradient><linearGradient id="mHole" x1="0" x2="1"><stop offset="0" stop-color="#6a6a6a"/><stop offset=".5" stop-color="#e8e8e8"/><stop offset="1" stop-color="#7a7a7a"/></linearGradient><linearGradient id="mGland" x1="0" x2="1"><stop offset="0" stop-color="#0a0a0a"/><stop offset=".62" stop-color="#0a0a0a"/><stop offset=".8" stop-color="#c0c0c0"/><stop offset="1" stop-color="#4a4a4a"/></linearGradient><linearGradient id="mHalf" x1="0" y1="0" x2="1" y2="0"><stop offset="0" stop-color="#4a4a4a"/><stop offset=".5" stop-color="#9a9a9a"/><stop offset="1" stop-color="#4a4a4a"/></linearGradient><linearGradient id="mRing" x1="0" y1="0" x2="0" y2="1"><stop offset="0" stop-color="#989898"/><stop offset=".25" stop-color="#acacac"/><stop offset=".5" stop-color="#bcbcbc"/><stop offset=".75" stop-color="#888"/><stop offset="1" stop-color="#484848"/></linearGradient><radialGradient id="mRingH" gradientUnits="userSpaceOnUse" cx="884" cy="553" r="26" gradientTransform="translate(884 553) scale(1 .32) translate(-884 -553)"><stop offset="0" stop-color="#fff" stop-opacity=".7"/><stop offset="1" stop-color="#fff" stop-opacity="0"/></radialGradient><linearGradient id="mRingR" gradientUnits="userSpaceOnUse" x1="905" y1="0" x2="950" y2="0"><stop offset="0" stop-color="#000" stop-opacity="0"/><stop offset=".6" stop-color="#000" stop-opacity=".12"/><stop offset="1" stop-color="#000" stop-opacity=".42"/></linearGradient></defs><polygon points="1084.5,751.5 1117,735 1137.5,736 1137.5,757.5 1105,813 1084.5,788" fill="#484848" stroke="none" stroke-width="0" stroke-linejoin="round" /><polygon points="1085.6,752 1106.9,750.4 1086.2,786" fill="#484848" stroke="#0c0c0c" stroke-width="0.8" stroke-linejoin="round" /><polygon points="1086.2,786.3 1117,735 1135.5,735 1105,787.7" fill="#979797" stroke="#0c0c0c" stroke-width="0.8" stroke-linejoin="round" /><polygon points="1105,788 1137.7,736 1137.7,757.5 1105,813" fill="#484848" stroke="#0c0c0c" stroke-width="1" stroke-linejoin="round" /><path d="M1106.5 788.5L1137 739.5" stroke="#8a8a8a" stroke-width="0.8" fill="none"/><polygon points="697.2,768.5 718.5,735.5 719.4,770" fill="#9c9c9c" stroke="#0c0c0c" stroke-width="0.8" stroke-linejoin="round" /><polygon points="719.4,730.5 1106.25,749 1106.25,753 1085,752.5 719.4,735.5" fill="#bcbcbc" stroke="none" stroke-width="0" stroke-linejoin="round" /><polygon points="696.9,768.75 718.75,770 719.4,735 1085,751.9 1084.4,787.5 1104.4,788.75 1104.4,813.1 696.25,792.5" fill="#a6a6a6" stroke="#0c0c0c" stroke-width="1.1" stroke-linejoin="round" /><polygon points="1124,337.25 1156.9,283 1155.6,331 1150.6,462 1145,593 1141.25,668 1140,697 1106.25,750 1111.9,643.6 1115,572.6 1116.9,531.4 1119.4,474.5 1121.25,412.25" fill="#484848" stroke="#0c0c0c" stroke-width="1" stroke-linejoin="round" /><path d="M1121.25 412.25L1155 360.4" stroke="#0a0a0a" stroke-width="2.6" fill="none"/><path d="M1121.25 412.25L1155 360.4" stroke="#777" stroke-width="1.100" stroke-dasharray="1.600 1.600" fill="none"/><path d="M1119.4 474.5L1152.5 422.9" stroke="#0a0a0a" stroke-width="2.6" fill="none"/><path d="M1119.4 474.5L1152.5 422.9" stroke="#777" stroke-width="1.100" stroke-dasharray="1.600 1.600" fill="none"/><path d="M1116.9 531.4L1150.6 478.25" stroke="#0a0a0a" stroke-width="2.6" fill="none"/><path d="M1116.9 531.4L1150.6 478.25" stroke="#777" stroke-width="1.100" stroke-dasharray="1.600 1.600" fill="none"/><path d="M1115 572.6L1148.75 520" stroke="#0a0a0a" stroke-width="2.6" fill="none"/><path d="M1115 572.6L1148.75 520" stroke="#777" stroke-width="1.100" stroke-dasharray="1.600 1.600" fill="none"/><path d="M1111.9 643.6L1143.75 595.5" stroke="#0a0a0a" stroke-width="2.6" fill="none"/><path d="M1111.9 643.6L1143.75 595.5" stroke="#777" stroke-width="1.100" stroke-dasharray="1.600 1.600" fill="none"/><ellipse cx="1140.6" cy="340.5" rx="1.200" ry="9.5" fill="#050505"/><ellipse cx="1143.2" cy="415.5" rx="1.200" ry="15.5" fill="#050505"/><ellipse cx="1131.2" cy="434.25" rx="1.200" ry="15.75" fill="#050505"/><ellipse cx="1125.8" cy="431" rx="1.200" ry="12" fill="#050505"/><ellipse cx="1138.7" cy="580.5" rx="1.200" ry="15.5" fill="#050505"/><ellipse cx="1122" cy="606" rx="1.200" ry="14" fill="#050505"/><polygon points="1103.75,336.6 1124,337.25 1156.9,283 1141.3,282.5 1126.25,309.4 1103.75,308.75" fill="#979797" stroke="#0c0c0c" stroke-width="0.9" stroke-linejoin="round" /><polygon points="1103.75,309 1121,309.8 1104.5,332" fill="#484848" stroke="#0c0c0c" stroke-width="0.8" stroke-linejoin="round" /><path d="M1124.5 336.5L1156 284.5" stroke="#6a6a6a" stroke-width="0.8" fill="none"/><polygon points="712.8,317.5 727.8,291.8 735.2,291.5 734.8,317.8" fill="#9a9a9a" stroke="#0c0c0c" stroke-width="0.9" stroke-linejoin="round" /><polygon points="735.6,291 1103.75,308.75 1103.75,336.6 1124,337.25 1121.25,412.25 1119.4,474.5 1116.9,531.4 1115,572.6 1111.9,643.6 1106.25,750 983,744.4 816.25,736.25 698.75,730.6 699.4,724 701.9,623 702.5,593 703.75,553.25 705,512 707.5,455 710.6,393 712.5,318 734.8,318" fill="#a6a6a6" stroke="none" stroke-width="0" stroke-linejoin="round" /><polyline points="714.4,289.4 735.6,291 734.8,318 712.5,318 710.6,393 707.5,455 705,512 703.75,553.25 702.5,593 701.9,623 699.4,724 698.75,730.6 816.25,736.25 983,744.4 1106.25,750 1111.9,643.6 1115,572.6 1116.9,531.4 1119.4,474.5 1121.25,412.25 1124,337.25 1103.75,336.6 1103.75,308.75 1126,309.4" fill="none" stroke="#0c0c0c" stroke-width="1.1"/><polyline points="714.8,319 712.9,393 709.8,455 707.3,512 706,553.25 704.8,593 704.2,623 701.7,724 701.2,730" fill="none" stroke="#0c0c0c" stroke-width="1"/><polyline points="1121.8,338 1119,412.25 1117.2,474.5 1114.7,531.4 1112.8,572.6 1109.7,643.6 1104.1,749" fill="none" stroke="#0c0c0c" stroke-width="1"/><polygon points="700.6,404.75 708.75,404 706.9,462 703.75,553 702.5,570.75 693.75,570.75 698.1,462" fill="#a6a6a6" stroke="#0c0c0c" stroke-width="1.1" stroke-linejoin="round" /><polygon points="700.6,404.75 702.5,402.5 709.5,402 708.75,404.5" fill="#7c7c7c" stroke="#0c0c0c" stroke-width="0.7" stroke-linejoin="round" /><polygon points="1125.6,285.25 1159.4,231.25 1159.4,250 1126.25,309.4" fill="#484848" stroke="#0c0c0c" stroke-width="1" stroke-linejoin="round" /><path d="M1127 286.5L1158.5 235.5" stroke="#8a8a8a" stroke-width="0.9" fill="none"/><polygon points="748.75,211.9 1159.4,231.25 1125.6,285.25 714.4,266.9" fill="#8c8c8c" stroke="#0c0c0c" stroke-width="1.1" stroke-linejoin="round" /><polygon points="714.4,266.9 1125.6,285.25 1126,309.4 1103.75,308.75 735.6,291 714.4,289.4" fill="#a6a6a6" stroke="none" stroke-width="0" stroke-linejoin="round" /><polyline points="735.6,291 714.4,289.4 714.4,266.9 1125.6,285.25 1126,309.4 1103.75,308.75" fill="none" stroke="#0c0c0c" stroke-width="1.1"/><path d="M715 269L1125 287.3" stroke="#5a5a5a" stroke-width="0.8" fill="none"/><ellipse cx="779" cy="218" rx="9" ry="1.6" fill="#0a0a0a" transform="rotate(2.7 779 218)"/><ellipse cx="806" cy="216.3" rx="12" ry="1.5" fill="#0a0a0a" transform="rotate(2.7 806 216.3)"/><ellipse cx="838" cy="225.5" rx="7" ry="1.6" fill="#0a0a0a" transform="rotate(2.7 838 225.5)"/><ellipse cx="831.5" cy="230.3" rx="8.5" ry="1.7" fill="#0a0a0a" transform="rotate(2.7 831.5 230.3)"/><ellipse cx="815.5" cy="236.2" rx="11" ry="2.2" fill="#8c8c8c" stroke="#0a0a0a" stroke-width="1.300" transform="rotate(2.7 815.5 236.2)"/><ellipse cx="834" cy="243.2" rx="19" ry="3.2" fill="url(#mHole)" stroke="#0a0a0a" stroke-width="1.400" transform="rotate(2.7 834 243.2)"/><ellipse cx="808" cy="247.7" rx="11" ry="2.3" fill="#8c8c8c" stroke="#0a0a0a" stroke-width="1.300" transform="rotate(2.7 808 247.7)"/><ellipse cx="816.5" cy="254.7" rx="8.5" ry="1.8" fill="#0a0a0a" transform="rotate(2.7 816.5 254.7)"/><ellipse cx="817" cy="260" rx="7" ry="1.5" fill="#0a0a0a" transform="rotate(2.7 817 260)"/><ellipse cx="756" cy="261.3" rx="10" ry="1.8" fill="#0a0a0a" transform="rotate(2.7 756 261.3)"/><ellipse cx="777" cy="266.3" rx="13" ry="1.9" fill="#0a0a0a" transform="rotate(2.7 777 266.3)"/><ellipse cx="945" cy="231" rx="7" ry="1.4" fill="#0a0a0a" transform="rotate(2.7 945 231)"/><ellipse cx="945" cy="234.7" rx="11" ry="2.2" fill="#8c8c8c" stroke="#0a0a0a" stroke-width="1.300" transform="rotate(2.7 945 234.7)"/><ellipse cx="943" cy="238.5" rx="8.5" ry="1.6" fill="#0a0a0a" transform="rotate(2.7 943 238.5)"/><ellipse cx="988.5" cy="225" rx="14" ry="1.7" fill="#0a0a0a" transform="rotate(2.7 988.5 225)"/><ellipse cx="931" cy="257" rx="6.5" ry="1.3" fill="#0a0a0a" transform="rotate(2.7 931 257)"/><ellipse cx="930" cy="260" rx="10" ry="2" fill="#8c8c8c" stroke="#0a0a0a" stroke-width="1.300" transform="rotate(2.7 930 260)"/><ellipse cx="927" cy="264" rx="7.5" ry="1.4" fill="#0a0a0a" transform="rotate(2.7 927 264)"/><ellipse cx="960" cy="265.6" rx="13" ry="2.2" fill="#8c8c8c" stroke="#0a0a0a" stroke-width="1.300" transform="rotate(2.7 960 265.6)"/><ellipse cx="885" cy="271.3" rx="13" ry="1.7" fill="#0a0a0a" transform="rotate(2.7 885 271.3)"/><ellipse cx="1057" cy="236.3" rx="7" ry="1.5" fill="#0a0a0a" transform="rotate(2.7 1057 236.3)"/><ellipse cx="1058" cy="241" rx="8.5" ry="1.7" fill="#0a0a0a" transform="rotate(2.7 1058 241)"/><ellipse cx="1066.5" cy="247.6" rx="11" ry="2.2" fill="#8c8c8c" stroke="#0a0a0a" stroke-width="1.300" transform="rotate(2.7 1066.5 247.6)"/><ellipse cx="1040" cy="253.2" rx="19" ry="3.2" fill="url(#mHole)" stroke="#0a0a0a" stroke-width="1.400" transform="rotate(2.7 1040 253.2)"/><ellipse cx="1059" cy="260" rx="11" ry="2.2" fill="#8c8c8c" stroke="#0a0a0a" stroke-width="1.300" transform="rotate(2.7 1059 260)"/><ellipse cx="1043" cy="265.6" rx="8.5" ry="1.7" fill="#0a0a0a" transform="rotate(2.7 1043 265.6)"/><ellipse cx="1036" cy="270.3" rx="7" ry="1.5" fill="#0a0a0a" transform="rotate(2.7 1036 270.3)"/><ellipse cx="1096" cy="230.3" rx="14" ry="1.7" fill="#0a0a0a" transform="rotate(2.7 1096 230.3)"/><ellipse cx="1117" cy="234.5" rx="10" ry="1.7" fill="#0a0a0a" transform="rotate(2.7 1117 234.5)"/><ellipse cx="1064" cy="280.3" rx="13" ry="1.7" fill="#0a0a0a" transform="rotate(2.7 1064 280.3)"/><ellipse cx="1090" cy="278.5" rx="9" ry="1.7" fill="#0a0a0a" transform="rotate(2.7 1090 278.5)"/><path d="M735.6 300.8L1103.75 318.4" stroke="#0c0c0c" stroke-width="1.25" fill="none"/><path d="M735.5 303.3L1103.65 320.9" stroke="#0c0c0c" stroke-width="1.25" fill="none"/><path d="M710.6 392.9L1121.25 413" stroke="#0c0c0c" stroke-width="1.25" fill="none"/><path d="M710.5 395.4L1121.15 415.5" stroke="#0c0c0c" stroke-width="1.25" fill="none"/><path d="M707.5 454.2L878.5 462.3" stroke="#0c0c0c" stroke-width="1.25" fill="none"/><path d="M707.4 456.7L878.4 464.8" stroke="#0c0c0c" stroke-width="1.25" fill="none"/><path d="M944 466.3L1119.4 473.9" stroke="#0c0c0c" stroke-width="1.25" fill="none"/><path d="M943.9 468.8L1119.3 476.4" stroke="#0c0c0c" stroke-width="1.25" fill="none"/><path d="M705 510.8L876.9 519.5" stroke="#0c0c0c" stroke-width="1.25" fill="none"/><path d="M704.9 513.3L876.8 522" stroke="#0c0c0c" stroke-width="1.25" fill="none"/><path d="M942 522L1116.9 530.8" stroke="#0c0c0c" stroke-width="1.25" fill="none"/><path d="M941.9 524.5L1116.8 533.3" stroke="#0c0c0c" stroke-width="1.25" fill="none"/><path d="M703.75 552L862.5 560.8" stroke="#0c0c0c" stroke-width="1.25" fill="none"/><path d="M703.65 554.5L862.4 563.3" stroke="#0c0c0c" stroke-width="1.25" fill="none"/><path d="M940.6 563.9L1115 572" stroke="#0c0c0c" stroke-width="1.25" fill="none"/><path d="M940.5 566.4L1114.9 574.5" stroke="#0c0c0c" stroke-width="1.25" fill="none"/><path d="M701.9 622.4L834 629.9" stroke="#0c0c0c" stroke-width="1.25" fill="none"/><path d="M701.8 624.9L833.9 632.4" stroke="#0c0c0c" stroke-width="1.25" fill="none"/><path d="M967.5 636.1L1111.9 643" stroke="#0c0c0c" stroke-width="1.25" fill="none"/><path d="M967.4 638.6L1111.8 645.5" stroke="#0c0c0c" stroke-width="1.25" fill="none"/><path d="M698.75 732.8L816 738.4" stroke="#333" stroke-width="0.9" fill="none"/><path d="M983 746.6L1106 752.2" stroke="#333" stroke-width="0.9" fill="none"/><path d="M927.500 306.300l47.500 2.200v4.600l-47.500-2.200z" fill="#b8b8b8" stroke="#111" stroke-width="1.100"/><path d="M945 300.800l15 .7v5.700l-15-.700z" fill="#8a8a8a" stroke="#111" stroke-width="1.100"/><path d="M969 308.300l6 .3v4.500l-6-.3z" fill="#6a6a6a"/><path d="M723 405l52.500 2.500q5 .3 4.900 5.300l-.5 15.500q-.3 4.800-5.200 4.600l-52.500-2.500q-5-.3-4.800-5.300l.5-15.500q.3-4.800 5.100-4.600z" fill="none" stroke="#111" stroke-width=".9"/><polygon points="880.2,417 940.6,418.9 939.1,466 937.5,500 933.75,593 932.5,621.5 872.5,618" fill="#a6a6a6" stroke="#0c0c0c" stroke-width="1.1" stroke-linejoin="round" /><path d="M882.3 419L875 618" stroke="#0c0c0c" stroke-width="0.8" fill="none"/><polygon points="940.6,418.9 944.4,412.6 946.9,415.7 944.4,466 940,593 938.5,622 932.5,621.5 933.75,593 937.5,500 939.1,466" fill="#484848" stroke="#0c0c0c" stroke-width="0.9" stroke-linejoin="round" /><polygon points="880.2,417 885.2,410.4 944.4,412.6 940.6,418.9" fill="#8a8a8a" stroke="#0c0c0c" stroke-width="1" stroke-linejoin="round" /><path d="M881.5 418.3L940 420.2" stroke="#d0d0d0" stroke-width="0.8" fill="none"/><circle cx="910.4" cy="440.9" r="20.3" fill="none" stroke="#0a0a0a" stroke-width="1.150"/><circle cx="910.4" cy="440.9" r="18.4" fill="none" stroke="#0a0a0a" stroke-width="1.150"/><circle cx="910.4" cy="440.9" r="16.9" fill="none" stroke="#0a0a0a" stroke-width="1.150"/><polygon points="921.685,441.491 915.53,450.968 904.246,450.377 899.115,440.309 905.27,430.832 916.554,431.423" fill="none" stroke="#0a0a0a" stroke-width="1.100"/><polygon points="920.087,441.408 914.804,449.543 905.117,449.035 900.713,440.392 905.996,432.257 915.683,432.765" fill="none" stroke="#0a0a0a" stroke-width="1.100"/><circle cx="904.2" cy="604.8" r="20.3" fill="none" stroke="#0a0a0a" stroke-width="1.150"/><circle cx="904.2" cy="604.8" r="18.4" fill="none" stroke="#0a0a0a" stroke-width="1.150"/><circle cx="904.2" cy="604.8" r="16.9" fill="none" stroke="#0a0a0a" stroke-width="1.150"/><polygon points="915.485,605.391 909.33,614.868 898.046,614.277 892.915,604.209 899.07,594.732 910.354,595.323" fill="none" stroke="#0a0a0a" stroke-width="1.100"/><polygon points="913.887,605.308 908.604,613.443 898.917,612.935 894.513,604.292 899.796,596.157 909.483,596.665" fill="none" stroke="#0a0a0a" stroke-width="1.100"/><g shape-rendering="geometricPrecision" transform="translate(919.8 290)"><circle r="9.72222" fill="#0c0c0c"/><circle r="8.86667" fill="none" stroke="#8c8c8c" stroke-width="0.7" stroke-dasharray="1.200 1.600"/><circle cx="-0.155556" cy="0.466667" r="7.54444" fill="url(#mBtnL)"/><circle cx="0.933333" cy="-1.78889" r="6.92222" fill="#080808"/><circle cx="1.55556" cy="-2.17778" r="5.52222" fill="url(#mBtn)"/><path d="M-1.16667 9.33333h2.33333" stroke="#d8d8d8" stroke-width="0.622222"/></g><g shape-rendering="geometricPrecision" transform="translate(917.5 357.5)"><circle r="9.72222" fill="#0c0c0c"/><circle r="8.86667" fill="none" stroke="#8c8c8c" stroke-width="0.7" stroke-dasharray="1.200 1.600"/><circle cx="-0.155556" cy="0.466667" r="7.54444" fill="url(#mBtnL)"/><circle cx="0.933333" cy="-1.78889" r="6.92222" fill="#080808"/><circle cx="1.55556" cy="-2.17778" r="5.52222" fill="url(#mBtn)"/><path d="M-1.16667 9.33333h2.33333" stroke="#d8d8d8" stroke-width="0.622222"/></g><g shape-rendering="geometricPrecision" transform="translate(760 681)"><circle r="11.9048" fill="#0c0c0c"/><circle r="10.8571" fill="none" stroke="#8c8c8c" stroke-width="0.857143" stroke-dasharray="1.200 1.600"/><circle cx="-0.190476" cy="0.571429" r="9.2381" fill="url(#mBtnL)"/><circle cx="1.14286" cy="-2.19048" r="8.47619" fill="#080808"/><circle cx="1.90476" cy="-2.66667" r="6.7619" fill="url(#mBtn)"/><path d="M-1.42857 11.4286h2.85714" stroke="#d8d8d8" stroke-width="0.761905"/></g><g shape-rendering="geometricPrecision" transform="translate(1049.4 695)"><circle r="11.9048" fill="#0c0c0c"/><circle r="10.8571" fill="none" stroke="#8c8c8c" stroke-width="0.857143" stroke-dasharray="1.200 1.600"/><circle cx="-0.190476" cy="0.571429" r="9.2381" fill="url(#mBtnL)"/><circle cx="1.14286" cy="-2.19048" r="8.47619" fill="#080808"/><circle cx="1.90476" cy="-2.66667" r="6.7619" fill="url(#mBtn)"/><path d="M-1.42857 11.4286h2.85714" stroke="#d8d8d8" stroke-width="0.761905"/></g><g stroke-linejoin="round" shape-rendering="geometricPrecision"><path d="M764.500 372l1.500 10.500 44.500 2 1.500-10.500z" fill="#a6a6a6" stroke="#111" stroke-width="1.200"/><path d="M766 379.500l45 2" stroke="#111" stroke-width="1"/><path d="M781 374.500l8 .4v6l-8-.4z" fill="#1a1a1a"/><circle cx="803" cy="378.500" r=".7" fill="#111"/><path d="M757 306.800l74 3.600q6.500 .5 6.500 6.500l-1 18-2 26q-1 10-12 11l-56-2.600q-10-1-11.500-10l-3-27v-19q.5-6.800 5-6.500z" fill="#9d9d9d" stroke="#111" stroke-width="1.300"/><path d="M753.500 322v36q1 10.500 11 11.500l48 2.200q9-.5 11-9l3.500-29" fill="none" stroke="#111" stroke-width="4.600"/><path d="M753.500 322v36q1 10.500 11 11.500l48 2.200q9-.5 11-9l3.500-29" fill="none" stroke="#8a8a8a" stroke-width="2.400"/><path d="M769 314.500l49 2.300v4l-49-2.300z" fill="#8a8a8a" stroke="#111" stroke-width="1"/><path d="M764 311l58 2.800" stroke="#111" stroke-width="1.600"/><path d="M790 313.500l22 1" stroke="#111" stroke-width="1"/><circle cx="757.7" cy="313.7" r="4.800" fill="#a0a0a0" stroke="#111" stroke-width="1.300"/><circle cx="757.7" cy="313.7" r="2.500" fill="#b8b8b8" stroke="#111" stroke-width=".9"/><circle cx="830.7" cy="318" r="4.800" fill="#a0a0a0" stroke="#111" stroke-width="1.300"/><circle cx="830.7" cy="318" r="2.500" fill="#b8b8b8" stroke="#111" stroke-width=".9"/><ellipse cx="820.500" cy="319.500" rx="4" ry="3" fill="#5a5a5a" transform="rotate(45 820.500 319.500)"/><path d="M767 320.300l48 2.300q5.500 .6 5.300 6l-1.300 28q-.8 6-6.500 5.800l-45-2.200q-6-.6-6-6.500l.5-28q.5-5.600 5-5.400z" fill="#a4a4a4" stroke="#111" stroke-width="2.200"/><path d="M766.500 324.500l48.500 2.300q3 .3 2.900 3.300l-1.200 24.500q-.4 3-3.400 2.900l-46-2.200q-3.100-.3-3-3.500l.4-24.500q.2-3 1.800-2.800z" fill="none" stroke="#111" stroke-width="1.300"/><path d="M766 336l8 .4 3-5.500 4-1.700 24 1.100 2.500 2.500 1 5.500 7 .4-.7 14-7.300-.3-2.800 5-5 2-22.500-1-4.500-2.800-1.200-4.600-6.500-.3z" fill="#adadad" stroke="#111" stroke-width="1.300"/><path d="M770 339l6 .3 2.500-5 3-1.200 21 1 1.800 1.800.9 5 5.200.3-.5 8.500-5.400-.2-2.200 4-3.500 1.400-20-.9-3.200-2-.9-3.800-4.900-.2z" fill="none" stroke="#111" stroke-width=".9"/><ellipse cx="783.8" cy="337" rx="3" ry="2.600" fill="#0a0a0a"/><path d="M783.8 332v5" stroke="#0a0a0a" stroke-width="1"/><ellipse cx="790.6" cy="337.3" rx="3" ry="2.600" fill="#0a0a0a"/><path d="M790.6 332.3v5" stroke="#0a0a0a" stroke-width="1"/><ellipse cx="797.8" cy="337.6" rx="3" ry="2.600" fill="#0a0a0a"/><path d="M797.8 332.6v5" stroke="#0a0a0a" stroke-width="1"/><ellipse cx="783.8" cy="345.5" rx="3" ry="2.600" fill="#0a0a0a"/><path d="M783.8 345.5v5" stroke="#0a0a0a" stroke-width="1"/><ellipse cx="790.6" cy="345.8" rx="3" ry="2.600" fill="#0a0a0a"/><path d="M790.6 345.8v5" stroke="#0a0a0a" stroke-width="1"/><ellipse cx="797.8" cy="346.1" rx="3" ry="2.600" fill="#0a0a0a"/><path d="M797.8 346.1v5" stroke="#0a0a0a" stroke-width="1"/><circle cx="790.400" cy="339.300" r=".9" fill="#bdbdbd"/><circle cx="797.800" cy="337.300" r=".8" fill="#bdbdbd"/><path d="M768 328a2.500 2.500 0 1 1 2.500 2.500" fill="none" stroke="#111" stroke-width="1.200"/><circle cx="812.500" cy="329" r="1.700" fill="none" stroke="#111" stroke-width=".9"/><circle cx="766.500" cy="353" r="2.200" fill="#222"/><circle cx="813" cy="357" r="2" fill="#222"/><path d="M750.500 325.500h8v5h-8zM749 339v11" fill="#b5b5b5" stroke="#111" stroke-width="1"/><path d="M825 329l9 .5-.3 5.500-9-.5zM827 352l6.500.3-.2 4-6.500-.3zM829 358l5 5-1.500 3.500-5-3z" fill="#b0b0b0" stroke="#111" stroke-width="1"/><path d="M826 337.500v24" stroke="#111" stroke-width="2.400"/><path d="M836.500 324.500l7 .3v31l-7-.3z" fill="#9a9a9a" stroke="#111" stroke-width="1"/><path d="M838 333.500h4.500v4H838zM838 347h4.500v3H838z" fill="#c8c8c8"/><path d="M843.500 329l7 .3v24l-7-.3z" fill="#1a1a1a"/><path d="M850.500 325.300l17 .6q6.500 1 6.300 8.500l-.4 14q-.5 7-6.500 7l-16.600-.7z" fill="url(#mGland)" stroke="#111" stroke-width=".8"/><path d="M851 343l22.500 1" stroke="#888" stroke-width=".9"/><path d="M866.500 326.500l-.8 29" stroke="#777" stroke-width=".8"/><path d="M852 327.500v27" stroke="#bbb" stroke-width="1"/></g><g stroke-linejoin="round"><path d="M826 632.500l10.500.5v104l-19.500-1 3.500-97q.8-6.200 5.500-6.500z" fill="#a6a6a6" stroke="#111" stroke-width="1.100"/><path d="M822 640l12 .600" stroke="#111" stroke-width="1"/><path d="M822 636l14 .700v3.600l-14-.700z" fill="#8a8a8a"/><path d="M966 638.500l23.500 3.200-4 95.800-19.500-.900z" fill="#a6a6a6" stroke="#111" stroke-width="1.100"/><path d="M985.500 642l4 .5-4 95-3.500-.2z" fill="#4a4a4a"/><path d="M968 639l18 2.600-.2 3.600-18-2.200z" fill="#8a8a8a"/><path d="M834.300 616.400l133.400 6.500v16l-133.400-4.100z" fill="#a6a6a6" stroke="#111" stroke-width="1.100"/><path d="M836 636l130 4.500v7.500l-127-5.500z" fill="#6e6e6e"/><path d="M836 640l130 5M838 644l126 5" stroke="#111" stroke-width="1.400"/><path d="M836 636.500l130 4.500" stroke="#111" stroke-width="1"/><path d="M833 644.500l2.500 96M837.500 645l-3 60" stroke="#111" stroke-width="1.500"/><path d="M966 652l-4.500 92M962 660l-1.500 40" stroke="#111" stroke-width="1.700"/><path d="M843 647.500l117 5.500q3 .3 2.800 3.200l-1.800 32q-.4 3-3.300 2.900l-117-5.600q-3-.3-2.800-3.300l1.800-31.800q.3-3 3.300-2.900z" fill="#a6a6a6" stroke="#111" stroke-width="1.600"/><path d="M843.500 650.800l115.800 5.400-1.700 30-115.800-5.400z" fill="none" stroke="#111" stroke-width="1"/><path d="M841.500 683l2-32.500" stroke="#555" stroke-width="2.400"/><path d="M841 685.500l118 5.500" stroke="#666" stroke-width="2.400"/><path d="M851.200 656.100l101.200 4.600-1.200 22.700-101.200-4.700z" fill="#a6a6a6" stroke="#111" stroke-width="1.300"/><path d="M853 656.900l99.400 4.500-1.200 21" fill="none" stroke="#111" stroke-width="3"/><rect x="853.9" y="660.7" width="3.400" height="3.200" fill="#2a2a2a" stroke="#111" stroke-width=".7"/><circle cx="863.945" cy="662.682" r="1.900" fill="#7a7a7a" stroke="#111" stroke-width=".9"/><circle cx="872.291" cy="663.064" r="1.900" fill="#7a7a7a" stroke="#111" stroke-width=".9"/><circle cx="880.636" cy="663.445" r="1.900" fill="#7a7a7a" stroke="#111" stroke-width=".9"/><circle cx="888.982" cy="663.827" r="1.900" fill="#7a7a7a" stroke="#111" stroke-width=".9"/><rect x="895.627" y="662.609" width="3.400" height="3.200" fill="#2a2a2a" stroke="#111" stroke-width=".7"/><circle cx="905.673" cy="664.591" r="1.900" fill="#7a7a7a" stroke="#111" stroke-width=".9"/><circle cx="914.018" cy="664.973" r="1.900" fill="#7a7a7a" stroke="#111" stroke-width=".9"/><circle cx="922.364" cy="665.355" r="1.900" fill="#7a7a7a" stroke="#111" stroke-width=".9"/><circle cx="930.709" cy="665.736" r="1.900" fill="#7a7a7a" stroke="#111" stroke-width=".9"/><rect x="937.355" y="664.518" width="3.400" height="3.200" fill="#2a2a2a" stroke="#111" stroke-width=".7"/><circle cx="947.4" cy="666.5" r="1.900" fill="#7a7a7a" stroke="#111" stroke-width=".9"/><circle cx="854.9" cy="673.5" r="1.900" fill="#7a7a7a" stroke="#111" stroke-width=".9"/><circle cx="863.245" cy="673.891" r="1.900" fill="#7a7a7a" stroke="#111" stroke-width=".9"/><circle cx="871.591" cy="674.282" r="1.900" fill="#7a7a7a" stroke="#111" stroke-width=".9"/><rect x="878.236" y="673.073" width="3.400" height="3.200" fill="#2a2a2a" stroke="#111" stroke-width=".7"/><circle cx="888.282" cy="675.064" r="1.900" fill="#7a7a7a" stroke="#111" stroke-width=".9"/><circle cx="896.627" cy="675.455" r="1.900" fill="#7a7a7a" stroke="#111" stroke-width=".9"/><circle cx="904.973" cy="675.845" r="1.900" fill="#7a7a7a" stroke="#111" stroke-width=".9"/><circle cx="913.318" cy="676.236" r="1.900" fill="#7a7a7a" stroke="#111" stroke-width=".9"/><rect x="919.964" y="675.027" width="3.400" height="3.200" fill="#2a2a2a" stroke="#111" stroke-width=".7"/><circle cx="930.009" cy="677.018" r="1.900" fill="#7a7a7a" stroke="#111" stroke-width=".9"/><circle cx="938.355" cy="677.409" r="1.900" fill="#7a7a7a" stroke="#111" stroke-width=".9"/><circle cx="946.7" cy="677.8" r="1.900" fill="#7a7a7a" stroke="#111" stroke-width=".9"/><path d="M838 690.500l124 5.800" stroke="#111" stroke-width="1.600"/><path d="M838.500 693l123 5.800" stroke="#111" stroke-width="1"/><path d="M840.500 695.300l117 5.500q3 .3 2.800 3.200l-1.800 35.500q-.4 3-3.300 2.900l-117-5.600q-3-.3-2.800-3.300l1.800-35.300q.3-3 3.300-2.900z" fill="#a6a6a6" stroke="#111" stroke-width="1.600"/><path d="M841.500 698.600l115.800 5.400-1.700 33.500-115.800-5.400z" fill="none" stroke="#111" stroke-width="1"/><path d="M849.500 704.300q-1.700 0-1.800 1.700l-1 19q0 1.800 1.700 1.900l100 4.600q1.700 0 1.800-1.700l1-19q0-1.800-1.700-1.900z" fill="#a6a6a6" stroke="#111" stroke-width="1.300"/><path d="M847 726.500l102.500 4.800" stroke="#111" stroke-width="2"/><ellipse cx="853.7" cy="709.3" rx="2.200" ry="2.500" fill="#a6a6a6" stroke="#111" stroke-width="1"/><path d="M853.4 707.8l2.200-1.500" stroke="#111" stroke-width="1"/><ellipse cx="861.991" cy="709.673" rx="2.200" ry="2.500" fill="#a6a6a6" stroke="#111" stroke-width="1"/><path d="M861.691 708.173l2.200-1.500" stroke="#111" stroke-width="1"/><ellipse cx="870.282" cy="710.045" rx="2.200" ry="2.500" fill="#a6a6a6" stroke="#111" stroke-width="1"/><path d="M869.982 708.545l2.200-1.500" stroke="#111" stroke-width="1"/><ellipse cx="878.573" cy="710.418" rx="2.200" ry="2.500" fill="#a6a6a6" stroke="#111" stroke-width="1"/><path d="M878.273 708.918l2.200-1.500" stroke="#111" stroke-width="1"/><ellipse cx="886.864" cy="710.791" rx="2.200" ry="2.500" fill="#a6a6a6" stroke="#111" stroke-width="1"/><path d="M886.564 709.291l2.200-1.500" stroke="#111" stroke-width="1"/><ellipse cx="895.155" cy="711.164" rx="2.200" ry="2.500" fill="#a6a6a6" stroke="#111" stroke-width="1"/><path d="M894.855 709.664l2.200-1.500" stroke="#111" stroke-width="1"/><ellipse cx="903.445" cy="711.536" rx="2.200" ry="2.500" fill="#a6a6a6" stroke="#111" stroke-width="1"/><path d="M903.145 710.036l2.200-1.500" stroke="#111" stroke-width="1"/><ellipse cx="911.736" cy="711.909" rx="2.200" ry="2.500" fill="#a6a6a6" stroke="#111" stroke-width="1"/><path d="M911.436 710.409l2.200-1.500" stroke="#111" stroke-width="1"/><ellipse cx="920.027" cy="712.282" rx="2.200" ry="2.500" fill="#a6a6a6" stroke="#111" stroke-width="1"/><path d="M919.727 710.782l2.200-1.500" stroke="#111" stroke-width="1"/><ellipse cx="928.318" cy="712.655" rx="2.200" ry="2.500" fill="#a6a6a6" stroke="#111" stroke-width="1"/><path d="M928.018 711.155l2.200-1.500" stroke="#111" stroke-width="1"/><ellipse cx="936.609" cy="713.027" rx="2.200" ry="2.500" fill="#a6a6a6" stroke="#111" stroke-width="1"/><path d="M936.309 711.527l2.200-1.500" stroke="#111" stroke-width="1"/><ellipse cx="944.9" cy="713.4" rx="2.200" ry="2.500" fill="#a6a6a6" stroke="#111" stroke-width="1"/><path d="M944.6 711.9l2.200-1.500" stroke="#111" stroke-width="1"/><ellipse cx="853.2" cy="721.3" rx="2.200" ry="2.500" fill="#a6a6a6" stroke="#111" stroke-width="1"/><path d="M852.9 719.8l2.200-1.500" stroke="#111" stroke-width="1"/><ellipse cx="861.491" cy="721.7" rx="2.200" ry="2.500" fill="#a6a6a6" stroke="#111" stroke-width="1"/><path d="M861.191 720.2l2.200-1.500" stroke="#111" stroke-width="1"/><ellipse cx="869.782" cy="722.1" rx="2.200" ry="2.500" fill="#a6a6a6" stroke="#111" stroke-width="1"/><path d="M869.482 720.6l2.200-1.500" stroke="#111" stroke-width="1"/><ellipse cx="878.073" cy="722.5" rx="2.200" ry="2.500" fill="#a6a6a6" stroke="#111" stroke-width="1"/><path d="M877.773 721l2.200-1.500" stroke="#111" stroke-width="1"/><ellipse cx="886.364" cy="722.9" rx="2.200" ry="2.500" fill="#a6a6a6" stroke="#111" stroke-width="1"/><path d="M886.064 721.4l2.200-1.500" stroke="#111" stroke-width="1"/><ellipse cx="894.655" cy="723.3" rx="2.200" ry="2.500" fill="#a6a6a6" stroke="#111" stroke-width="1"/><path d="M894.355 721.8l2.200-1.500" stroke="#111" stroke-width="1"/><ellipse cx="902.945" cy="723.7" rx="2.200" ry="2.500" fill="#a6a6a6" stroke="#111" stroke-width="1"/><path d="M902.645 722.2l2.200-1.500" stroke="#111" stroke-width="1"/><ellipse cx="911.236" cy="724.1" rx="2.200" ry="2.500" fill="#a6a6a6" stroke="#111" stroke-width="1"/><path d="M910.936 722.6l2.200-1.500" stroke="#111" stroke-width="1"/><ellipse cx="919.527" cy="724.5" rx="2.200" ry="2.500" fill="#a6a6a6" stroke="#111" stroke-width="1"/><path d="M919.227 723l2.200-1.500" stroke="#111" stroke-width="1"/><ellipse cx="927.818" cy="724.9" rx="2.200" ry="2.500" fill="#a6a6a6" stroke="#111" stroke-width="1"/><path d="M927.518 723.4l2.200-1.500" stroke="#111" stroke-width="1"/><ellipse cx="936.109" cy="725.3" rx="2.200" ry="2.500" fill="#a6a6a6" stroke="#111" stroke-width="1"/><path d="M935.809 723.8l2.200-1.500" stroke="#111" stroke-width="1"/><ellipse cx="944.4" cy="725.7" rx="2.200" ry="2.500" fill="#a6a6a6" stroke="#111" stroke-width="1"/><path d="M944.1 724.2l2.200-1.500" stroke="#111" stroke-width="1"/><circle cx="824.6" cy="688.4" r="3.500" fill="#a6a6a6" stroke="#111" stroke-width="1"/><circle cx="824.6" cy="688.4" r="1.700" fill="none" stroke="#111" stroke-width=".8"/><circle cx="833.5" cy="682" r="3.500" fill="#a6a6a6" stroke="#111" stroke-width="1"/><circle cx="833.5" cy="682" r="1.700" fill="none" stroke="#111" stroke-width=".8"/><circle cx="833.2" cy="696.3" r="3.500" fill="#a6a6a6" stroke="#111" stroke-width="1"/><circle cx="833.2" cy="696.3" r="1.700" fill="none" stroke="#111" stroke-width=".8"/><circle cx="836" cy="649.5" r="3.500" fill="#a6a6a6" stroke="#111" stroke-width="1"/><circle cx="836" cy="649.5" r="1.700" fill="none" stroke="#111" stroke-width=".8"/><circle cx="967.8" cy="688.8" r="3.500" fill="#a6a6a6" stroke="#111" stroke-width="1"/><circle cx="967.8" cy="688.8" r="1.700" fill="none" stroke="#111" stroke-width=".8"/><circle cx="977.6" cy="696.2" r="3.500" fill="#a6a6a6" stroke="#111" stroke-width="1"/><circle cx="977.6" cy="696.2" r="1.700" fill="none" stroke="#111" stroke-width=".8"/><circle cx="967.4" cy="703.6" r="3.500" fill="#a6a6a6" stroke="#111" stroke-width="1"/><circle cx="967.4" cy="703.6" r="1.700" fill="none" stroke="#111" stroke-width=".8"/><circle cx="969.5" cy="655" r="3.500" fill="#a6a6a6" stroke="#111" stroke-width="1"/><circle cx="969.5" cy="655" r="1.700" fill="none" stroke="#111" stroke-width=".8"/><circle cx="968" cy="736.5" r="3.500" fill="#a6a6a6" stroke="#111" stroke-width="1"/><circle cx="968" cy="736.5" r="1.700" fill="none" stroke="#111" stroke-width=".8"/><path d="M964.500 716v10" stroke="#111" stroke-width="2.600"/><path d="M834.500 712v6M834 726v8" stroke="#ccc" stroke-width="1.200"/><path d="M829 738.500l133 6.500-.2 31.300-133.400-5.900z" fill="#a6a6a6" stroke="#111" stroke-width="1.100"/><path d="M829.200 749l132.600 6" stroke="#111" stroke-width="1"/><path d="M829.200 751.300l132.600 6" stroke="#d6d6d6" stroke-width="1.400"/><path d="M829.200 753.800l132.600 6" stroke="#9a9a9a" stroke-width="1.800"/><path d="M829 756.800l132.800 6" stroke="#111" stroke-width="1"/><path d="M830 739.500l131 6.200" stroke="#111" stroke-width="1.800"/><path d="M892 774.200a9.500 9.500 0 0 0 18.800 .9z" fill="url(#mHalf)" stroke="#222" stroke-width=".8"/><path d="M893.500 775a8 8 0 0 0 16 .8" fill="none" stroke="#ddd" stroke-width=".8"/></g><g shape-rendering="geometricPrecision"><circle cx="906.300" cy="546.300" r="26.200" fill="none" stroke="#111" stroke-width="1"/><circle cx="906.300" cy="546.300" r="23.600" fill="none" stroke="#111" stroke-width="1"/><path d="M912 520.500a26.200 26.200 0 0 1 20 18.500l-2.600 .6a23.600 23.600 0 0 0-17.800-16.500z" fill="#6a6a6a" stroke="#111" stroke-width=".6"/><path d="M883.500 536.500l17 9.500M931.500 539l-20 7" stroke="#111" stroke-width="1"/><path d="M910.500 546q8-5.500 21-7l-2 5z" fill="#e0e0e0"/><path d="M856.300 550Q856.500 544.500 860.500 540.500Q866 536.800 875 536.900Q884 537.400 891 540.500Q898 543.500 903.800 546.300Q907 546.800 910 545.600Q915 543.300 921 541.500Q927 539.600 933 539.400Q940 539.700 944 542.300Q948.500 546 948.800 551.300Q948.500 556 945 559.500Q939 563.600 931 565.500Q919 568 906 568.100Q891 567.500 879 564.700Q868 561.500 861.500 557Q856.800 553.500 856.300 550Z" fill="url(#mRing)"/><path d="M856.300 550Q856.500 544.500 860.500 540.500Q866 536.800 875 536.900Q884 537.400 891 540.500Q898 543.500 903.800 546.300Q907 546.800 910 545.600Q915 543.300 921 541.500Q927 539.600 933 539.400Q940 539.700 944 542.300Q948.500 546 948.800 551.300Q948.500 556 945 559.500Q939 563.600 931 565.500Q919 568 906 568.100Q891 567.500 879 564.700Q868 561.500 861.500 557Q856.800 553.500 856.300 550Z" fill="url(#mRingH)"/><path d="M856.300 550Q856.500 544.500 860.500 540.500Q866 536.800 875 536.900Q884 537.400 891 540.500Q898 543.500 903.800 546.300Q907 546.800 910 545.600Q915 543.300 921 541.500Q927 539.600 933 539.400Q940 539.700 944 542.300Q948.500 546 948.800 551.300Q948.500 556 945 559.500Q939 563.600 931 565.500Q919 568 906 568.100Q891 567.500 879 564.700Q868 561.500 861.500 557Q856.800 553.500 856.300 550Z" fill="url(#mRingR)"/><path d="M867 540.500q10-1.500 20 2.500 8 3 14 6" fill="none" stroke="#6a6a6a" stroke-width="1.800" opacity=".55"/><path d="M911 545.800q9-5 21.500-6.200-3.500 3.800-9.500 5.200-6 1.500-12 1z" fill="#ececec" opacity=".9"/></g></svg>
<svg class="ic" style="left:105px;top:922px" width="70" height="85" viewBox="105 922 70 85"><path d="M119 945.500h27v22.500h-11.500l-1 .8H119z" fill="#7e8f60" stroke="#f4f020" stroke-width="1.100"/><path d="M122 940h24" stroke="#e4e4e4" stroke-width="1.200"/><path d="M120 942.300h29" stroke="#d80000" stroke-width="2.800"/><path d="M146 938.800l9 3.700-9 3.200z" fill="#c80000"/><path d="M118.500 945v46" stroke="#00c800" stroke-width="2.800"/><path d="M114.500 982l7.600-.5-3.800 10.500z" fill="#00a800"/><path d="M120 941l5-8" stroke="#18b8c8" stroke-width="2.200"/><circle cx="125" cy="935" r="4" fill="#20c8d8"/><circle cx="125" cy="935" r="1.800" fill="#7ae8f0"/><circle cx="119.500" cy="941.500" r="3.600" fill="url(#gBall)" stroke="#444" stroke-width=".4"/><path d="M157.500 940l7 8M164.500 940l-7 8" stroke="#e0e0e0" stroke-width="1"/><path d="M113.500 994.500l3 5 3-5" fill="none" stroke="#f00000" stroke-width="1"/><path d="M122 929.500h6l-6 5" fill="none" stroke="#f00000" stroke-width="1"/></svg>
<svg class="ic" style="left:1730px;top:860px" width="190" height="90" viewBox="1730 860 190 90"><defs><linearGradient id="dBack" x1="0" x2="1"><stop offset="0" stop-color="#1574b0"/><stop offset=".45" stop-color="#2d8fc8"/><stop offset=".8" stop-color="#a9d2ea"/><stop offset="1" stop-color="#cfe6f4"/></linearGradient></defs><rect x="1751" y="866.800" width="157" height="70" rx="9" fill="url(#dBack)"/><rect x="1735.300" y="872.600" width="170" height="58.600" rx="8" fill="#fff" stroke="#1a86d0" stroke-width="1.100"/><path d="M1747.600 887h17.400v10h-17.400zM1756.300 881.300v20.500" fill="none" stroke="#000" stroke-width="1.900"/><path d="M1786 884.300a8.500 8.500 0 1 1-8 12.600 7 7 0 0 0 8-12.600z" fill="#000"/><path d="M1750.400 910.500l-1 4" stroke="#000" stroke-width="1.200"/><circle cx="1760.200" cy="923.200" r="2.100" fill="#fff" stroke="#000" stroke-width="1"/><path d="M1779.800 911h4q2.500 2 5 0h4l2.500 3.600-2.800 2.600-1.200-1v9.300h-10v-9.300l-1.200 1-2.800-2.600z" fill="#000"/><circle cx="1897.500" cy="895.200" r="5" fill="#e60020"/><path d="M1899 913q7-.5 12 3 7 5 9.500 9.500l0 9q-6 2.500-15 1.500-6-2-7-8z" fill="#fff" stroke="#c8b8b0" stroke-width=".5"/><path d="M1872 900q6-4 12-2.500 9 2.500 14 10.500 6 8 6.500 15 0 6-4 8.500-7 3.500-15 4-10 .6-17 1.200-6 3-13.500 5-7 .5-10-1.500-4-3-3-6z" fill="#009fe8" stroke="#0a78b8" stroke-width=".4"/><path d="M1812 919.500q-1.500 5 2 9 4 3 10 3l14-1 6-6-20-10z" fill="#009fe8" stroke="#0a78b8" stroke-width=".4"/><circle cx="1848" cy="896.300" r="29.800" fill="#009fe8" stroke="#0a78b8" stroke-width=".4"/><path d="M1875 911.500q-2 6-7.500 11l-1.500-1.500q5-5 7-10.500z" fill="#d8141c"/><path d="M1812 893Q1814 885 1822 880Q1828 876.500 1834 875.500Q1846 873 1856 878Q1864.500 884 1866.500 894Q1868 905 1862 913Q1855 921 1843 922.500Q1830 923.500 1821 916.500Q1813.500 910 1812 901Z" fill="#fff" stroke="#a8a8a8" stroke-width=".4"/><ellipse cx="1815.300" cy="912.600" rx="5.600" ry="6.600" fill="#fff" stroke="#999" stroke-width=".5" transform="rotate(-25 1815.300 912.600)"/><path d="M1828.500 923.500q7 4.500 15 5.500l-.5 2.200q-8.500-1-15.500-5.700z" fill="#d8141c"/><circle cx="1837.400" cy="932.300" r="5.300" fill="#f4dc2a" stroke="#b89a0a" stroke-width=".7"/><path d="M1832.500 930.500q5-1.500 10 0" stroke="#b89a0a" stroke-width=".7" fill="none"/><circle cx="1836.200" cy="933.300" r="1.400" fill="#6a4a8a"/><ellipse cx="1852.200" cy="927.200" rx="8.600" ry="7" fill="#fff" stroke="#999" stroke-width=".5"/><ellipse cx="1839.500" cy="876.300" rx="7.200" ry="8.400" fill="#fff" stroke="#555" stroke-width=".5" transform="rotate(25 1839.500 876.300)"/><ellipse cx="1852.400" cy="883.600" rx="7.600" ry="8.700" fill="#fff" stroke="#555" stroke-width=".5" transform="rotate(25 1852.400 883.600)"/><path d="M1837.300 878.300q1.800 3.800 4 3.200 2-.6 3.500-1.600" fill="none" stroke="#000" stroke-width="1.100" stroke-linecap="round"/><ellipse cx="1848.100" cy="883.300" rx="2.200" ry="3.200" fill="#000" transform="rotate(15 1848.100 883.300)"/><ellipse cx="1848.300" cy="883.300" rx=".8" ry="1.300" fill="#fff"/><circle cx="1838.700" cy="887.100" r="4.400" fill="#e60020"/><circle cx="1840" cy="886.700" r="1.400" fill="#fff"/><path d="M1836.300 891.600q-6 9-8 20M1816.300 906.400q10 9 24 8.500 14-1 24-10.200" fill="none" stroke="#555" stroke-width=".55"/><path d="M1813 882.800l12 5.200M1812 889.600l13.800 3.500M1815.500 880.500l12.800 8M1845.100 896.500h19.800M1844.700 900l18.900 4.700M1843.800 903.400l15.900 10.700" stroke="#555" stroke-width=".55" fill="none"/></svg>
<div class="abs" style="left:2px;top:1020px;width:1914px;height:1px;background:#a2a5ab"></div><div class="abs" style="left:1336px;top:1003px;width:4px;height:16px;background:conic-gradient(#aab0c2 25%,rgba(0,0,0,0) 0 50%,#aab0c2 0 75%,rgba(0,0,0,0) 0);background-size:2px 2px;opacity:.85"></div><div class="abs" style="left:1341px;top:1002.5px;width:133px;height:16.5px;background:#fff"></div><svg class="ic" style="left:1459px;top:1003px" width="16" height="16" viewBox="0 0 16 16"><circle cx="9.500" cy="6.500" r="4" fill="#fff" stroke="#3a6ab8" stroke-width="1.300"/><path d="M6.500 9.500l-4 4" stroke="#3a6ab8" stroke-width="1.800" stroke-linecap="round"/></svg><div class="abs" style="left:1475px;top:1003px;width:4px;height:16px;background:conic-gradient(#aab0c2 25%,rgba(0,0,0,0) 0 50%,#aab0c2 0 75%,rgba(0,0,0,0) 0);background-size:2px 2px;opacity:.85"></div><div class="lt cj" style="left:1486px;top:1003px">绝对 XY 上视图</div><div class="abs" style="left:1592px;top:1003px;width:1px;height:16px;background:#9aa0ae"></div><div class="lt cj" style="left:1601px;top:1003px">绝对视图</div><div class="abs" style="left:1658px;top:1003px;width:4px;height:16px;background:conic-gradient(#aab0c2 25%,rgba(0,0,0,0) 0 50%,#aab0c2 0 75%,rgba(0,0,0,0) 0);background-size:2px 2px;opacity:.85"></div><div class="lt" style="left:1669px;top:1003.700px;font-size:12px;font-weight:bold;letter-spacing:-0.1px">LAYER0</div><div class="abs" style="left:1726px;top:1003px;width:1px;height:16px;background:#9aa0ae"></div><div class="abs" style="left:1757.5px;top:1003px;width:1px;height:16px;background:#9aa0ae"></div><div class="abs" style="left:1800px;top:1003px;width:1px;height:16px;background:#9aa0ae"></div><div class="abs" style="left:1842.5px;top:1003px;width:1px;height:16px;background:#9aa0ae"></div><div class="abs" style="left:1885px;top:1003px;width:1px;height:16px;background:#9aa0ae"></div><div class="abs" style="left:1762.5px;top:1004.5px;width:31.5px;height:13px;background:#47638f"></div><div class="abs" style="left:1805.5px;top:1004.5px;width:31.5px;height:13px;background:#47638f"></div><div class="abs" style="left:1848px;top:1004.5px;width:31.5px;height:13px;background:#47638f"></div><svg class="ic" style="left:1892px;top:1002px" width="16" height="16" viewBox="0 0 16 16"><circle cx="8" cy="7.700" r="6.200" fill="#1428b8" stroke="#060c48" stroke-width=".8"/><path d="M4.500 4.500q2.500-2 4.500-.3 1 1.800-1 2.800-2.500 1-2.500 3-2-1-2-3zM9.800 7.800q2.500-1 3.700 .8-.8 3.500-3.700 4.400-1-2.700 0-5.200z" fill="#28d030"/><circle cx="6.300" cy="5.300" r="2.200" fill="#fff" opacity=".3"/></svg><div class="abs" style="left:1132px;top:1023px;width:1px;height:16px;background:#9aa0ae"></div><div class="lt cj" style="left:1141px;top:1022.5px">拴牢</div><div class="abs" style="left:1175px;top:1023px;width:1px;height:16px;background:#9aa0ae"></div><div class="abs" style="left:1206px;top:1023px;width:1px;height:16px;background:#9aa0ae"></div><div class="abs" style="left:1237px;top:1023px;width:1px;height:16px;background:#9aa0ae"></div><div class="abs" style="left:1268px;top:1023px;width:1px;height:16px;background:#9aa0ae"></div><div class="abs" style="left:1298px;top:1023px;width:1px;height:16px;background:#9aa0ae"></div><div class="abs" style="left:1330px;top:1023px;width:1px;height:16px;background:#9aa0ae"></div><div class="abs" style="left:1361px;top:1023px;width:1px;height:16px;background:#9aa0ae"></div><div class="abs" style="left:1392px;top:1023px;width:1px;height:16px;background:#9aa0ae"></div><div class="abs" style="left:1423px;top:1023px;width:1px;height:16px;background:#9aa0ae"></div><div class="abs" style="left:1453px;top:1023px;width:1px;height:16px;background:#9aa0ae"></div><div class="abs" style="left:1580px;top:1023px;width:1px;height:16px;background:#9aa0ae"></div><div class="abs" style="left:1654.5px;top:1023px;width:1px;height:16px;background:#9aa0ae"></div><svg class="ic" style="left:1182px;top:1022.5px" width="16" height="16" viewBox="0 0 16 16"><rect x="1" y="1" width="14" height="14" rx="1" fill="#cfd3de" stroke="#6e7080" stroke-width="1.400"/><path d="M3.800 7.500a4.200 3.800 0 0 1 7-2.300l1.200-1.200.3 4.200-4.200-.4 1.400-1.300a2.400 2.100 0 0 0-3.800 1.200zM12.200 8.500a4.200 3.800 0 0 1-7 2.300l-1.200 1.200-.3-4.200 4.200.4-1.400 1.300a2.400 2.100 0 0 0 3.800-1.200z" fill="#e8707c" stroke="#d04858" stroke-width=".4"/></svg><div class="abs" style="left:1211.5px;top:1021.5px;width:19px;height:18px;background:#ffe680"></div><svg class="ic" style="left:1213px;top:1022.5px" width="16" height="16" viewBox="0 0 16 16"><path d="M6 .8l1.200 2.700 2.600-1.600-.4 3 3 .2-2.200 2 2 2.300-3 .2.300 3-2.500-1.600L5.600 13.800 4.800 10.900l-3 .5 1.500-2.600L.8 7.100l2.800-1L2.500 3.300l3 .5z" fill="#f07ad0" stroke="#e89a30" stroke-width=".8"/><path d="M7 5.500l7.500 7.200-2.800.3 1.500 2.400-1.300.8-1.500-2.500-2 1.800z" fill="#f4ecd0" stroke="#5a5a5a" stroke-width=".7"/></svg><svg class="ic" style="left:1244.5px;top:1022.5px" width="16" height="16" viewBox="0 0 16 16"><rect x="3" y="7.500" width="8.500" height="7.500" fill="#cfe0f8" stroke="#3a5a9a" stroke-width=".8"/><path d="M5.800 7.500v7.500M8.600 7.500v7.500M3 10h8.500M3 12.500h8.500" stroke="#3a6ac8" stroke-width=".7"/><path d="M2 8.200l5.500-5.200q2-1.800 4.500-.8l3 1.800v3.200l-3.600.2-2.400 2z" fill="#e8b878" stroke="#8a6a3a" stroke-width=".7"/><path d="M6 6.500l5-4" stroke="#8a6a3a" stroke-width=".5"/></svg><svg class="ic" style="left:1275px;top:1022.5px" width="16" height="16" viewBox="0 0 16 16"><ellipse cx="8" cy="14.800" rx="4" ry="1" fill="#000" opacity=".2"/><path d="M4.500 5.500q0-4 3.700-4 3.600 0 3.600 3.300 0 2-1.900 3.200-1.100.7-1.100 2.100H6.300q0-2.300 1.500-3.300 1.300-.9 1.300-2 0-1.200-1.100-1.200-1.300 0-1.300 1.900z" fill="#4a7ad8" stroke="#2a4a98" stroke-width=".5"/><circle cx="7.600" cy="12.600" r="1.400" fill="#4a7ad8" stroke="#2a4a98" stroke-width=".5"/></svg><svg class="ic" style="left:1306px;top:1022.5px" width="16" height="16" viewBox="0 0 16 16"><g transform="translate(3 .5) scale(.62)"><path d="M0 3l6-3 6 3v7l-6 3-6-3z" fill="#4a8ae8" stroke="#1a3a98" stroke-width=".9"/><path d="M0 3l6-3 6 3-6 3z" fill="#a8d0ff"/><path d="M6 6l6-3v7l-6 3z" fill="#2a5ac8"/></g><g transform="translate(6.800 6.500) scale(.68)"><path d="M0 3l6-3 6 3v7l-6 3-6-3z" fill="#7a9aa0" stroke="#1a2a30" stroke-width="1"/><path d="M0 3l6-3 6 3-6 3z" fill="#b0c8c8"/><path d="M6 6l6-3v7l-6 3z" fill="#4a6a70"/><path d="M0 3l6 3v7M6 6l6-3" fill="none" stroke="#1a2a30" stroke-width=".8"/></g><path d="M.5 10.500h5" stroke="#e81010" stroke-width="1.500"/><path d="M4 7.800l3.500 2.700-3.500 2.700" fill="none" stroke="#e81010" stroke-width="1.500"/></svg><div class="abs" style="left:1335.5px;top:1021.5px;width:19px;height:18px;background:#ffe680"></div><svg class="ic" style="left:1337px;top:1022.5px" width="16" height="16" viewBox="0 0 16 16"><path d="M1.500 4.500l6.500-3 6.500 3v7.500l-6.500 3.300-6.500-3.300z" fill="#9ab4b0" stroke="#2a4ac8" stroke-width="1"/><path d="M1.500 4.500l6.500-3 6.500 3-6.500 3z" fill="#e83ce8" stroke="#2a4ac8" stroke-width=".7"/><path d="M8 7.500l6.500-3v7.500l-6.500 3.300z" fill="#b4ccc4"/><path d="M8 7.500v7.800M1.500 4.500l6.500 3 6.500-3" fill="none" stroke="#2a4ac8" stroke-width=".9"/></svg><svg class="ic" style="left:1367.5px;top:1022.5px" width="16" height="16" viewBox="0 0 16 16"><rect x="3.500" y="1" width="9" height="14" fill="#e4e8f0" stroke="#6a6a6a" stroke-width="1.200"/><path d="M3.500 5.500h9M3.500 10h9" stroke="#6a6a6a" stroke-width="1"/><rect x="4.200" y="6.200" width="7.600" height="3.200" fill="#f0a848"/><rect x="4.200" y="10.700" width="7.600" height="3.500" fill="#f4f0dc"/></svg><svg class="ic" style="left:1399.5px;top:1022.5px" width="16" height="16" viewBox="0 0 16 16"><path d="M8 2.800a6 6 0 1 1-6 6.200" fill="none" stroke="#1f8a1f" stroke-width="1.800"/><path d="M9 -.3v6.400l-4.600-3.200z" fill="#1f8a1f"/><path d="M6 9h4M8 7v4" stroke="#2a3aa8" stroke-width="1.300"/></svg><svg class="ic" style="left:1429.5px;top:1022.5px" width="16" height="16" viewBox="0 0 16 16"><rect x="1.500" y="1.500" width="13" height="13" fill="#e0e4ee" stroke="#3a3a58" stroke-width="1.600"/><path d="M8 1.500v13M1.500 8h13" stroke="#3a3a58" stroke-width="1.500"/></svg><div class="lt" style="left:1463px;top:1023.500px;font-size:12px;letter-spacing:-0.060px">LS: 1.00 PS: 1.00</div><div class="lt cj" style="left:1589px;top:1022.5px">单位: 毫米</div><div class="lt" style="left:1662.500px;top:1023.500px;font-size:12px;color:#f00;letter-spacing:.450px">X =-0000.969</div><div class="lt" style="left:1745px;top:1023.500px;font-size:12px;letter-spacing:.370px">Y = 0065.597 Z = 0000.000</div>
<div style="left:0;top:1040px;width:1920px;height:8px;background:linear-gradient(90deg,#3a2e27,#453d2e 30%,#47412f 45%,#423828 70%,#3d3028)"></div>
<div style="left:510px;top:1040px;width:44px;height:8px;background:#69675a;"></div>
<div style="left:555px;top:1040px;width:1px;height:8px;background:#2e2a22;"></div>
<div style="left:1915.5px;top:1040px;width:1px;height:8px;background:#857c72;"></div>
<div style="left:1800px;top:1040px;width:100px;height:8px;overflow:hidden"><div class="lt" style="left:15.500px;top:3px;font-size:12px;color:#fff;letter-spacing:.3px">18:52</div></div>
</body></html>
